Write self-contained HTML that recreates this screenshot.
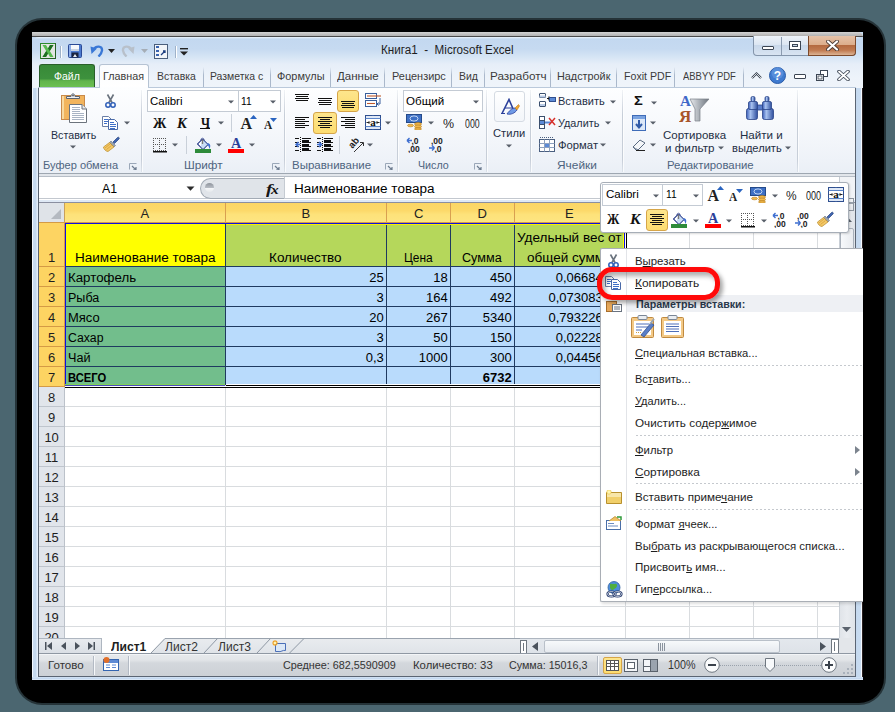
<!DOCTYPE html><html><head><meta charset="utf-8"><style>html,body{margin:0;padding:0;width:895px;height:712px;overflow:hidden;position:relative;background:#4b6670}</style></head><body>
<div style="position:absolute;left:15px;top:18px;width:871px;height:687px;background:rgba(0,0,0,0.5);border-radius:27px"></div>
<div style="position:absolute;left:17px;top:20px;width:867px;height:683px;background:#000;border-radius:25px"></div>
<div style="position:absolute;left:32px;top:32px;width:831px;height:648px;background:#c6daf0"></div>
<div style="position:absolute;left:32px;top:32px;width:831px;height:5px;background:linear-gradient(#d2d2d2,#a9a9a9);border-radius:0 7px 0 0"></div>
<div style="position:absolute;left:32px;top:36px;width:831px;height:1px;background:#4a4a4a;border-radius:0 7px 0 0"></div>
<div style="position:absolute;left:32px;top:37px;width:831px;height:51px;background:linear-gradient(#eef5fc 0px,#c3d8f0 2px,#c6daf1 12px,#d6e5f5 20px,#e6eef8 27px,#edf3fa 40px,#eff4fa 51px);border-radius:7px 7px 0 0"></div>
<div style="position:absolute;left:32px;top:88px;width:6px;height:592px;background:linear-gradient(90deg,#f4f9ff 0 1px,#c9dcf1 1px,#c4d8ee 4px,#e4eefa 5px)"></div>
<div style="position:absolute;left:856px;top:88px;width:7px;height:592px;background:linear-gradient(90deg,#c4d8ee 0,#c9dcf1 5px,#f4f9ff 5px 6px,#2a2020 6px)"></div>
<div style="position:absolute;left:32px;top:677px;width:831px;height:3px;background:linear-gradient(#d4e4f6,#c4d8ef 50%,#e4eefa)"></div>
<svg style="position:absolute;left:40px;top:43px;" width="16" height="16" viewBox="0 0 16 16">
<rect x="0.5" y="0.5" width="15" height="15" fill="#e3e6e3" stroke="#2d8a2d"/>
<path d="M15.5 0.5 V15.5 H0.5" fill="none" stroke="#1e3a1e" stroke-dasharray="1 1"/>
<path d="M2.5 2 L6 2 L8 5.5 L10 2 L13.5 2 L9.8 8 L13.5 14 L10 14 L8 10.5 L6 14 L2.5 14 L6.2 8 Z" fill="#57b94f"/>
<path d="M2.5 14 L6 14 L8 10.5 L6.2 8 Z M10 2 L13.5 2 L9.8 8 L8 5.5 Z" fill="#1e6e22"/></svg>
<div style="position:absolute;left:60px;top:46px;width:1px;height:12px;background:#9fb2c9;box-shadow:1px 0 0 #fff"></div>
<svg style="position:absolute;left:68px;top:44px;" width="14" height="14" viewBox="0 0 14 14">
<rect x="0.5" y="0.5" width="13" height="13" rx="1" fill="#4d7bd0" stroke="#2b4a96"/>
<rect x="1" y="1" width="2" height="12" fill="#8fb0ea"/>
<rect x="3" y="1" width="8" height="6" fill="#f6f8fb"/>
<rect x="3" y="5" width="8" height="2" fill="#c9d3e2"/>
<rect x="3.5" y="8.5" width="7" height="5" fill="#1a2440"/>
<path d="M5 13 L7 10 L9 13 Z" fill="#e8ecf2"/></svg>
<svg style="position:absolute;left:90px;top:44px;" width="14" height="13" viewBox="0 0 14 13">
<path d="M3.5 5.5 C6 1.5, 12.5 1.5, 12 6.5 C11.8 9, 10 11, 8.5 12.5" fill="none" stroke="#3a78d6" stroke-width="2.4"/>
<path d="M0.5 2.5 L7 4.5 L1.5 10 Z" fill="#3a78d6"/></svg>
<svg style="position:absolute;left:108px;top:49px;" width="7" height="4" viewBox="0 0 7 4"><path d="M0 0 L7 0 L3.5 4 Z" fill="#222"/></svg>
<svg style="position:absolute;left:121px;top:44px;" width="14" height="13" viewBox="0 0 14 13">
<path d="M10.5 5.5 C8 1.5, 1.5 1.5, 2 6.5 C2.2 9, 4 11, 5.5 12.5" fill="none" stroke="#b8c0ca" stroke-width="2.4"/>
<path d="M13.5 2.5 L7 4.5 L12.5 10 Z" fill="#b8c0ca"/></svg>
<svg style="position:absolute;left:141px;top:49px;" width="7" height="4" viewBox="0 0 7 4"><path d="M0 0 L7 0 L3.5 4 Z" fill="#a5adb6"/></svg>
<svg style="position:absolute;left:154px;top:44px;" width="14" height="15" viewBox="0 0 14 15">
<rect x="0.5" y="0.5" width="13" height="14" fill="#f2f5f9" stroke="#4a5e7c"/>
<rect x="2" y="2" width="3" height="2" fill="#3a64b0"/><rect x="2" y="6" width="3" height="2" fill="#3a64b0"/><rect x="2" y="10" width="3" height="2" fill="#3a64b0"/>
<path d="M7 11 L11 7 M9 7 L11 7 L11 9" stroke="#1d3f80" stroke-width="1.3" fill="none"/></svg>
<div style="position:absolute;left:175px;top:46px;width:1px;height:12px;background:#9fb2c9;box-shadow:1px 0 0 #fff"></div>
<svg style="position:absolute;left:180px;top:48px;" width="8" height="8" viewBox="0 0 8 8"><rect x="0" y="0" width="8" height="1.4" fill="#222"/><path d="M0 3.5 L8 3.5 L4 7.5 Z" fill="#222"/></svg>
<div id="t0" style="position:absolute;left:381.00px;top:43px;font:normal 12px/15px 'Liberation Sans', sans-serif;color:#1e1e1e;white-space:nowrap;transform:scaleX(0.9720);transform-origin:0 0;">Книга1&nbsp; -&nbsp; Microsoft Excel</div>
<div style="position:absolute;left:753px;top:36px;width:103px;height:20px;background:linear-gradient(#eef3f9,#dce6f2 45%,#c9d8ea 50%,#d8e4f2);border:1px solid #8495ab;border-top:none;border-radius:0 0 4px 4px;box-sizing:border-box"></div>
<div style="position:absolute;left:781px;top:37px;width:1px;height:18px;background:#8b9bb0"></div>
<div style="position:absolute;left:808px;top:36px;width:48px;height:20px;background:linear-gradient(#e6c2a8,#dcae8c 45%,#b46a40 50%,#c07a50 75%,#dcb494);border:1px solid #7c4a2c;border-top:none;border-radius:0 0 4px 0;box-sizing:border-box"></div>
<div style="position:absolute;left:762px;top:46px;width:12px;height:4px;background:#fff;border:1px solid #3c4654;border-radius:1px;box-sizing:border-box"></div>
<div style="position:absolute;left:789px;top:41px;width:12px;height:9px;border:1px solid #3c4654;background:transparent;box-sizing:border-box;box-shadow:inset 0 0 0 2px #fff, inset 0 0 0 3px #3c4654"></div>
<svg style="position:absolute;left:826px;top:40px;" width="13" height="11" viewBox="0 0 13 11"><path d="M2 1.5 L11 9.5 M11 1.5 L2 9.5" stroke="#4a3a34" stroke-width="3.8" stroke-linecap="round"/><path d="M2 1.5 L11 9.5 M11 1.5 L2 9.5" stroke="#fff" stroke-width="2.2" stroke-linecap="round"/></svg>
<div style="position:absolute;left:39px;top:64px;width:56px;height:23px;background:linear-gradient(#388a38,#3d913d 62%,#62b44c 72%,#6cc052);border:1px solid #2a5f2a;border-bottom:none;border-radius:3px 3px 0 0;box-sizing:border-box"></div>
<div id="t1" style="position:absolute;left:54.10px;top:69px;font:normal 11px/14px 'Liberation Sans', sans-serif;color:#fff;white-space:nowrap;transform:scaleX(0.9577);transform-origin:0 0;">Файл</div>
<div style="position:absolute;left:99px;top:64px;width:50px;height:24px;background:linear-gradient(#fbfcfe,#fff);border:1px solid #b6c3d3;border-bottom:none;border-radius:3px 3px 0 0;box-sizing:border-box"></div>
<div id="t2" style="position:absolute;left:103.30px;top:69px;font:normal 11px/14px 'Liberation Sans', sans-serif;color:#3b3b3b;white-space:nowrap;transform:scaleX(0.9783);transform-origin:0 0;">Главная</div>
<div style="position:absolute;left:203px;top:67px;width:1px;height:20px;background:linear-gradient(rgba(170,185,205,0),#aab8cb 40%,#aab8cb)"></div>
<div style="position:absolute;left:270px;top:67px;width:1px;height:20px;background:linear-gradient(rgba(170,185,205,0),#aab8cb 40%,#aab8cb)"></div>
<div style="position:absolute;left:330px;top:67px;width:1px;height:20px;background:linear-gradient(rgba(170,185,205,0),#aab8cb 40%,#aab8cb)"></div>
<div style="position:absolute;left:384px;top:67px;width:1px;height:20px;background:linear-gradient(rgba(170,185,205,0),#aab8cb 40%,#aab8cb)"></div>
<div style="position:absolute;left:451px;top:67px;width:1px;height:20px;background:linear-gradient(rgba(170,185,205,0),#aab8cb 40%,#aab8cb)"></div>
<div style="position:absolute;left:484px;top:67px;width:1px;height:20px;background:linear-gradient(rgba(170,185,205,0),#aab8cb 40%,#aab8cb)"></div>
<div style="position:absolute;left:550px;top:67px;width:1px;height:20px;background:linear-gradient(rgba(170,185,205,0),#aab8cb 40%,#aab8cb)"></div>
<div style="position:absolute;left:616px;top:67px;width:1px;height:20px;background:linear-gradient(rgba(170,185,205,0),#aab8cb 40%,#aab8cb)"></div>
<div style="position:absolute;left:674px;top:67px;width:1px;height:20px;background:linear-gradient(rgba(170,185,205,0),#aab8cb 40%,#aab8cb)"></div>
<div style="position:absolute;left:743px;top:67px;width:1px;height:20px;background:linear-gradient(rgba(170,185,205,0),#aab8cb 40%,#aab8cb)"></div>
<div id="t3" style="position:absolute;left:157.40px;top:69px;font:normal 11px/14px 'Liberation Sans', sans-serif;color:#3b3b3b;white-space:nowrap;transform:scaleX(0.9481);transform-origin:0 0;">Вставка</div>
<div id="t4" style="position:absolute;left:210.40px;top:69px;font:normal 11px/14px 'Liberation Sans', sans-serif;color:#3b3b3b;white-space:nowrap;transform:scaleX(0.9472);transform-origin:0 0;">Разметка с</div>
<div id="t5" style="position:absolute;left:276.80px;top:69px;font:normal 11px/14px 'Liberation Sans', sans-serif;color:#3b3b3b;white-space:nowrap;transform:scaleX(0.9925);transform-origin:0 0;">Формулы</div>
<div id="t6" style="position:absolute;left:337.20px;top:69px;font:normal 11px/14px 'Liberation Sans', sans-serif;color:#3b3b3b;white-space:nowrap;transform:scaleX(1.0474);transform-origin:0 0;">Данные</div>
<div id="t7" style="position:absolute;left:391.50px;top:69px;font:normal 11px/14px 'Liberation Sans', sans-serif;color:#3b3b3b;white-space:nowrap;transform:scaleX(0.9937);transform-origin:0 0;">Рецензирс</div>
<div id="t8" style="position:absolute;left:458.50px;top:69px;font:normal 11px/14px 'Liberation Sans', sans-serif;color:#3b3b3b;white-space:nowrap;transform:scaleX(0.9521);transform-origin:0 0;">Вид</div>
<div id="t9" style="position:absolute;left:490.00px;top:69px;font:normal 11px/14px 'Liberation Sans', sans-serif;color:#3b3b3b;white-space:nowrap;transform:scaleX(1.0656);transform-origin:0 0;">Разработч</div>
<div id="t10" style="position:absolute;left:557.10px;top:69px;font:normal 11px/14px 'Liberation Sans', sans-serif;color:#3b3b3b;white-space:nowrap;transform:scaleX(0.9853);transform-origin:0 0;">Надстройк</div>
<div id="t11" style="position:absolute;left:623.50px;top:69px;font:normal 11px/14px 'Liberation Sans', sans-serif;color:#3b3b3b;white-space:nowrap;transform:scaleX(0.9660);transform-origin:0 0;">Foxit PDF</div>
<div id="t12" style="position:absolute;left:683.40px;top:69px;font:normal 11px/14px 'Liberation Sans', sans-serif;color:#3b3b3b;white-space:nowrap;transform:scaleX(0.8578);transform-origin:0 0;">ABBYY PDF</div>
<svg style="position:absolute;left:751px;top:72px;" width="11" height="7" viewBox="0 0 11 7"><path d="M1 6 L5.5 1.5 L10 6" fill="none" stroke="#3c4654" stroke-width="2.2"/><path d="M1 6 L5.5 1.5 L10 6" fill="none" stroke="#fff" stroke-width="0.8"/></svg>
<svg style="position:absolute;left:769px;top:67px;" width="17" height="17" viewBox="0 0 17 17"><circle cx="8.5" cy="8.5" r="8" fill="#3e7ad0" stroke="#2b5ca8"/><circle cx="8.5" cy="6" r="6" fill="#6fa2e6" opacity="0.5"/><text x="8.5" y="13" text-anchor="middle" font-family="Liberation Sans" font-weight="bold" font-size="12" fill="#fff">?</text></svg>
<div style="position:absolute;left:794px;top:74px;width:12px;height:5px;background:#fff;border:1px solid #3c4654;border-radius:1px;box-sizing:border-box"></div>
<svg style="position:absolute;left:816px;top:70px;" width="12" height="11" viewBox="0 0 12 11"><rect x="4.5" y="0.5" width="7" height="6" fill="#fff" stroke="#3c4654"/><rect x="0.5" y="4.5" width="7" height="6" fill="#fff" stroke="#3c4654"/><rect x="2" y="6" width="4" height="3" fill="none" stroke="#3c4654" stroke-width="0.8"/></svg>
<svg style="position:absolute;left:837px;top:70px;" width="13" height="11" viewBox="0 0 13 11"><path d="M2 1.5 L11 9.5 M11 1.5 L2 9.5" stroke="#3c4654" stroke-width="3.6" stroke-linecap="round"/><path d="M2 1.5 L11 9.5 M11 1.5 L2 9.5" stroke="#fff" stroke-width="1.8" stroke-linecap="round"/></svg>
<div style="position:absolute;left:38px;top:87px;width:818px;height:86px;background:linear-gradient(#fdfeff,#f7f9fc 40%,#eef2f8 85%,#eaeff6);border-top:1px solid #bac9db;box-sizing:border-box"></div>
<div style="position:absolute;left:100px;top:87px;width:48px;height:1px;background:#fdfeff"></div>
<div style="position:absolute;left:141px;top:90px;width:1px;height:82px;background:linear-gradient(rgba(197,205,215,0.2),#c7ced8 30%,#c7ced8 85%,rgba(197,205,215,0.4))"></div>
<div style="position:absolute;left:142px;top:90px;width:1px;height:82px;background:rgba(255,255,255,0.7)"></div>
<div style="position:absolute;left:284px;top:90px;width:1px;height:82px;background:linear-gradient(rgba(197,205,215,0.2),#c7ced8 30%,#c7ced8 85%,rgba(197,205,215,0.4))"></div>
<div style="position:absolute;left:285px;top:90px;width:1px;height:82px;background:rgba(255,255,255,0.7)"></div>
<div style="position:absolute;left:397px;top:90px;width:1px;height:82px;background:linear-gradient(rgba(197,205,215,0.2),#c7ced8 30%,#c7ced8 85%,rgba(197,205,215,0.4))"></div>
<div style="position:absolute;left:398px;top:90px;width:1px;height:82px;background:rgba(255,255,255,0.7)"></div>
<div style="position:absolute;left:486px;top:90px;width:1px;height:82px;background:linear-gradient(rgba(197,205,215,0.2),#c7ced8 30%,#c7ced8 85%,rgba(197,205,215,0.4))"></div>
<div style="position:absolute;left:487px;top:90px;width:1px;height:82px;background:rgba(255,255,255,0.7)"></div>
<div style="position:absolute;left:530px;top:90px;width:1px;height:82px;background:linear-gradient(rgba(197,205,215,0.2),#c7ced8 30%,#c7ced8 85%,rgba(197,205,215,0.4))"></div>
<div style="position:absolute;left:531px;top:90px;width:1px;height:82px;background:rgba(255,255,255,0.7)"></div>
<div style="position:absolute;left:622px;top:90px;width:1px;height:82px;background:linear-gradient(rgba(197,205,215,0.2),#c7ced8 30%,#c7ced8 85%,rgba(197,205,215,0.4))"></div>
<div style="position:absolute;left:623px;top:90px;width:1px;height:82px;background:rgba(255,255,255,0.7)"></div>
<div style="position:absolute;left:797px;top:90px;width:1px;height:82px;background:linear-gradient(rgba(197,205,215,0.2),#c7ced8 30%,#c7ced8 85%,rgba(197,205,215,0.4))"></div>
<div style="position:absolute;left:798px;top:90px;width:1px;height:82px;background:rgba(255,255,255,0.7)"></div>
<div id="t13" style="position:absolute;left:42.50px;top:158px;font:normal 11px/14px 'Liberation Sans', sans-serif;color:#4e6480;white-space:nowrap;transform:scaleX(1.0049);transform-origin:0 0;">Буфер обмена</div>
<div id="t14" style="position:absolute;left:184.40px;top:158px;font:normal 11px/14px 'Liberation Sans', sans-serif;color:#4e6480;white-space:nowrap;transform:scaleX(1.0677);transform-origin:0 0;">Шрифт</div>
<div id="t15" style="position:absolute;left:292.30px;top:158px;font:normal 11px/14px 'Liberation Sans', sans-serif;color:#4e6480;white-space:nowrap;transform:scaleX(1.0450);transform-origin:0 0;">Выравнивание</div>
<div id="t16" style="position:absolute;left:417.70px;top:158px;font:normal 11px/14px 'Liberation Sans', sans-serif;color:#4e6480;white-space:nowrap;transform:scaleX(0.9709);transform-origin:0 0;">Число</div>
<div id="t17" style="position:absolute;left:557.00px;top:158px;font:normal 11px/14px 'Liberation Sans', sans-serif;color:#4e6480;white-space:nowrap;transform:scaleX(1.0803);transform-origin:0 0;">Ячейки</div>
<div id="t18" style="position:absolute;left:666.70px;top:158px;font:normal 11px/14px 'Liberation Sans', sans-serif;color:#4e6480;white-space:nowrap;transform:scaleX(1.0337);transform-origin:0 0;">Редактирование</div>
<svg style="position:absolute;left:129px;top:163px;" width="8" height="7" viewBox="0 0 8 7"><path d="M0.5 6.5 L0.5 0.5 L7.5 0.5" fill="none" stroke="#9aa7b8"/><path d="M3 3 L7 7 M7 4 L7 7 L4 7" fill="none" stroke="#6d7c90" stroke-width="1.2"/></svg>
<svg style="position:absolute;left:272px;top:163px;" width="8" height="7" viewBox="0 0 8 7"><path d="M0.5 6.5 L0.5 0.5 L7.5 0.5" fill="none" stroke="#9aa7b8"/><path d="M3 3 L7 7 M7 4 L7 7 L4 7" fill="none" stroke="#6d7c90" stroke-width="1.2"/></svg>
<svg style="position:absolute;left:385px;top:163px;" width="8" height="7" viewBox="0 0 8 7"><path d="M0.5 6.5 L0.5 0.5 L7.5 0.5" fill="none" stroke="#9aa7b8"/><path d="M3 3 L7 7 M7 4 L7 7 L4 7" fill="none" stroke="#6d7c90" stroke-width="1.2"/></svg>
<svg style="position:absolute;left:474px;top:163px;" width="8" height="7" viewBox="0 0 8 7"><path d="M0.5 6.5 L0.5 0.5 L7.5 0.5" fill="none" stroke="#9aa7b8"/><path d="M3 3 L7 7 M7 4 L7 7 L4 7" fill="none" stroke="#6d7c90" stroke-width="1.2"/></svg>
<svg style="position:absolute;left:60px;top:92px;" width="28" height="32" viewBox="0 0 28 32">
<rect x="1.5" y="3.5" width="23" height="24" fill="#f2b45c" stroke="#c98a4a"/>
<rect x="2" y="4" width="2" height="23" fill="#f8d9a0"/>
<path d="M6.5 6.5 H19.5 V4.5 H15 C15 1, 11 1, 11 4.5 H6.5 Z" fill="#eef1f5" stroke="#5d6570"/>
<circle cx="13" cy="3.6" r="1" fill="#5d6570"/>
<path d="M9.5 12.5 H22 L26.5 17 V30.5 H9.5 Z" fill="#fff" stroke="#6c737c"/>
<path d="M22 12.5 V17 H26.5" fill="#e6e9ed" stroke="#6c737c"/>
<path d="M12 15.5 H20 M12 17.5 H20 M12 19.5 H20 M12 21.5 H24 M12 23.5 H24 M12 25.5 H24 M12 27.5 H24" stroke="#a9b4c4"/></svg>
<div id="t19" style="position:absolute;left:50.60px;top:128px;font:normal 11px/14px 'Liberation Sans', sans-serif;color:#1f2f45;white-space:nowrap;transform:scaleX(0.9702);transform-origin:0 0;">Вставить</div>
<svg style="position:absolute;left:70px;top:145px;" width="6" height="4" viewBox="0 0 6 4"><path d="M0 0.5 L6 0.5 L3 3.5 Z" fill="#585f69"/></svg>
<svg style="position:absolute;left:105px;top:94px;" width="11" height="14" viewBox="0 0 11 14"><path d="M2.5 0.5 L7 8.5 M8.5 0.5 L4 8.5" stroke="#6a737e" stroke-width="1.6"/>
<circle cx="3" cy="11" r="2.2" fill="none" stroke="#2f5fb8" stroke-width="1.5"/>
<circle cx="8" cy="11" r="2.2" fill="none" stroke="#2f5fb8" stroke-width="1.5"/></svg>
<svg style="position:absolute;left:102px;top:116px;" width="17" height="14" viewBox="0 0 17 14"><path d="M0.5 0.5 H6.5 L9.5 3.5 V10.5 H0.5 Z" fill="#fff" stroke="#6b7fa6"/>
<path d="M2 3.5 H6 M2 5.5 H8 M2 7.5 H5" stroke="#3f6fc8"/>
<path d="M6.5 3.5 H12.5 L15.5 6.5 V13.5 H6.5 Z" fill="#fff" stroke="#4a6aa8"/>
<path d="M8 6.5 H12 M8 8.5 H14 M8 10.5 H14 M8 12.5 H13" stroke="#3f6fc8"/></svg>
<svg style="position:absolute;left:124px;top:121px;" width="6" height="4" viewBox="0 0 6 4"><path d="M0 0.5 L6 0.5 L3 3.5 Z" fill="#585f69"/></svg>
<svg style="position:absolute;left:103px;top:136px;" width="17" height="16" viewBox="0 0 17 16"><path d="M10 6 L14.5 1.5 C15.5 0.5, 17 2, 16 3 L11.5 7.5 Z" fill="#3f64b0" stroke="#28457f" stroke-width="0.7"/>
<path d="M8 5 L12.5 9.5 L11 11 L6.5 6.5 Z" fill="#9aa3ae" stroke="#6b7480" stroke-width="0.6"/>
<path d="M6.5 6.5 L11 11 L5 15.5 C3 15.5, 0.5 13, 0.5 11 Z" fill="#f3c867" stroke="#b88a2a" stroke-width="0.7"/>
<path d="M2 12 L7 8 M3.5 13.5 L8.5 9.5" stroke="#d39a30" stroke-width="0.7"/></svg>
<div style="position:absolute;left:147px;top:90px;width:134px;height:22px;background:#fff;border:1px solid #c4cbd4;box-sizing:border-box"></div>
<div style="position:absolute;left:238px;top:91px;width:1px;height:20px;background:#c4cbd4"></div>
<div id="t20" style="position:absolute;left:150.40px;top:94px;font:normal 11px/14px 'Liberation Sans', sans-serif;color:#000;white-space:nowrap;transform:scaleX(1.0413);transform-origin:0 0;">Calibri</div>
<svg style="position:absolute;left:228px;top:100px;" width="6" height="4" viewBox="0 0 6 4"><path d="M0 0.5 L6 0.5 L3 3.5 Z" fill="#585f69"/></svg>
<div id="t21" style="position:absolute;left:240.50px;top:94px;font:normal 11px/14px 'Liberation Sans', sans-serif;color:#000;white-space:nowrap;transform:scaleX(0.9291);transform-origin:0 0;">11</div>
<svg style="position:absolute;left:270px;top:100px;" width="6" height="4" viewBox="0 0 6 4"><path d="M0 0.5 L6 0.5 L3 3.5 Z" fill="#585f69"/></svg>
<div id="t22" style="position:absolute;left:152.50px;top:114px;font:bold 15px/18px 'Liberation Sans', sans-serif;color:#111;white-space:nowrap;font-family:'Liberation Serif';transform:scaleX(0.9000);transform-origin:0 0;">Ж</div>
<div id="t23" style="position:absolute;left:177.46px;top:114px;font:bold 15px/18px 'Liberation Sans', sans-serif;color:#111;white-space:nowrap;font-family:'Liberation Serif';font-style:italic;transform:scaleX(0.9583);transform-origin:0 0;">К</div>
<div id="t24" style="position:absolute;left:200.50px;top:114px;font:bold 15px/18px 'Liberation Sans', sans-serif;color:#111;white-space:nowrap;font-family:'Liberation Serif';transform:scaleX(0.8182);transform-origin:0 0;">Ч</div>
<div style="position:absolute;left:200px;top:128px;width:10px;height:1px;background:#111"></div>
<svg style="position:absolute;left:218px;top:121px;" width="6" height="4" viewBox="0 0 6 4"><path d="M0 0.5 L6 0.5 L3 3.5 Z" fill="#585f69"/></svg>
<div style="position:absolute;left:231px;top:114px;width:1px;height:18px;background:#c9d0d9"></div>
<div id="t25" style="position:absolute;left:240.50px;top:114px;font:bold 16px/19px 'Liberation Sans', sans-serif;color:#222;white-space:nowrap;font-family:'Liberation Serif';">A</div>
<svg style="position:absolute;left:250px;top:115px;" width="7" height="4" viewBox="0 0 7 4"><path d="M0 4 L3.5 0 L7 4 Z" fill="#2a64c0"/></svg>
<div id="t26" style="position:absolute;left:264.00px;top:118px;font:bold 12px/15px 'Liberation Sans', sans-serif;color:#222;white-space:nowrap;font-family:'Liberation Serif';transform:scaleX(0.9444);transform-origin:0 0;">A</div>
<svg style="position:absolute;left:270px;top:118px;" width="7" height="4" viewBox="0 0 7 4"><path d="M0 0 L7 0 L3.5 4 Z" fill="#2a64c0"/></svg>
<svg style="position:absolute;left:153px;top:138px;" width="14" height="15" viewBox="0 0 14 15"><rect x="0" y="0" width="1" height="1" fill="#555"/><rect x="0" y="0" width="1" height="1" fill="#555"/><rect x="0" y="6" width="1" height="1" fill="#555"/><rect x="6" y="0" width="1" height="1" fill="#555"/><rect x="0" y="12" width="1" height="1" fill="#555"/><rect x="12" y="0" width="1" height="1" fill="#555"/><rect x="2" y="0" width="1" height="1" fill="#555"/><rect x="0" y="2" width="1" height="1" fill="#555"/><rect x="2" y="6" width="1" height="1" fill="#555"/><rect x="6" y="2" width="1" height="1" fill="#555"/><rect x="2" y="12" width="1" height="1" fill="#555"/><rect x="12" y="2" width="1" height="1" fill="#555"/><rect x="4" y="0" width="1" height="1" fill="#555"/><rect x="0" y="4" width="1" height="1" fill="#555"/><rect x="4" y="6" width="1" height="1" fill="#555"/><rect x="6" y="4" width="1" height="1" fill="#555"/><rect x="4" y="12" width="1" height="1" fill="#555"/><rect x="12" y="4" width="1" height="1" fill="#555"/><rect x="6" y="0" width="1" height="1" fill="#555"/><rect x="0" y="6" width="1" height="1" fill="#555"/><rect x="6" y="6" width="1" height="1" fill="#555"/><rect x="6" y="6" width="1" height="1" fill="#555"/><rect x="6" y="12" width="1" height="1" fill="#555"/><rect x="12" y="6" width="1" height="1" fill="#555"/><rect x="8" y="0" width="1" height="1" fill="#555"/><rect x="0" y="8" width="1" height="1" fill="#555"/><rect x="8" y="6" width="1" height="1" fill="#555"/><rect x="6" y="8" width="1" height="1" fill="#555"/><rect x="8" y="12" width="1" height="1" fill="#555"/><rect x="12" y="8" width="1" height="1" fill="#555"/><rect x="10" y="0" width="1" height="1" fill="#555"/><rect x="0" y="10" width="1" height="1" fill="#555"/><rect x="10" y="6" width="1" height="1" fill="#555"/><rect x="6" y="10" width="1" height="1" fill="#555"/><rect x="10" y="12" width="1" height="1" fill="#555"/><rect x="12" y="10" width="1" height="1" fill="#555"/><rect x="12" y="0" width="1" height="1" fill="#555"/><rect x="0" y="12" width="1" height="1" fill="#555"/><rect x="12" y="6" width="1" height="1" fill="#555"/><rect x="6" y="12" width="1" height="1" fill="#555"/><rect x="12" y="12" width="1" height="1" fill="#555"/><rect x="12" y="12" width="1" height="1" fill="#555"/><rect x="0" y="13" width="14" height="1.5" fill="#111"/></svg>
<svg style="position:absolute;left:172px;top:143px;" width="6" height="4" viewBox="0 0 6 4"><path d="M0 0.5 L6 0.5 L3 3.5 Z" fill="#585f69"/></svg>
<div style="position:absolute;left:186px;top:136px;width:1px;height:18px;background:#c9d0d9"></div>
<svg style="position:absolute;left:195px;top:137px;" width="17" height="16" viewBox="0 0 17 16"><path d="M2.5 7 L7.5 2 L13 7.5 L8 12.5 Z" fill="#fff" stroke="#2c3f8c" stroke-width="1"/>
<path d="M7.5 2 L13 7.5 L8 12.5 L5.5 10 Z" fill="#c9dcf4"/>
<path d="M2.5 7 L7.5 2 L13 7.5 L8 12.5 Z" fill="none" stroke="#2c3f8c" stroke-width="1"/>
<path d="M6 3.5 C5.5 0.5, 9.5 0.5, 9 3.5" fill="none" stroke="#2c3f8c" stroke-width="0.9"/>
<path d="M7.5 2.5 V7" stroke="#777" stroke-width="1.4"/>
<path d="M12.5 6 C15.5 6.5, 16 9, 14.5 12 C14 10, 13.5 8.5, 12.5 8 Z" fill="#3f6fd0"/>
<rect x="0" y="12" width="16" height="4" fill="#2e8b3a"/></svg>
<svg style="position:absolute;left:216px;top:143px;" width="6" height="4" viewBox="0 0 6 4"><path d="M0 0.5 L6 0.5 L3 3.5 Z" fill="#585f69"/></svg>
<div id="t27" style="position:absolute;left:231.20px;top:134px;font:bold 15px/18px 'Liberation Sans', sans-serif;color:#2b3f9a;white-space:nowrap;font-family:'Liberation Serif';transform:scaleX(0.9455);transform-origin:0 0;">A</div>
<div style="position:absolute;left:228px;top:149px;width:16px;height:4px;background:#ff0000"></div>
<svg style="position:absolute;left:249px;top:143px;" width="6" height="4" viewBox="0 0 6 4"><path d="M0 0.5 L6 0.5 L3 3.5 Z" fill="#585f69"/></svg>
<svg style="position:absolute;left:295px;top:94px;" width="15" height="10" viewBox="0 0 15 10"><rect x="0" y="0" width="14" height="1" fill="#111"/><rect x="1" y="2" width="12" height="1" fill="#111"/><rect x="0" y="4" width="14" height="1" fill="#111"/><rect x="1" y="6" width="12" height="1" fill="#111"/></svg>
<svg style="position:absolute;left:318px;top:98px;" width="15" height="10" viewBox="0 0 15 10"><rect x="0" y="0" width="14" height="1" fill="#111"/><rect x="1" y="2" width="12" height="1" fill="#111"/><rect x="0" y="4" width="14" height="1" fill="#111"/><rect x="1" y="6" width="12" height="1" fill="#111"/></svg>
<div style="position:absolute;left:337px;top:90px;width:22px;height:22px;background:linear-gradient(#fde58c,#fcdc70);border:1px solid #d6a548;border-radius:3px;box-sizing:border-box"></div>
<svg style="position:absolute;left:341px;top:101px;" width="15" height="10" viewBox="0 0 15 10"><rect x="0" y="0" width="14" height="1" fill="#111"/><rect x="1" y="2" width="12" height="1" fill="#111"/><rect x="0" y="4" width="14" height="1" fill="#111"/><rect x="1" y="6" width="12" height="1" fill="#111"/></svg>
<svg style="position:absolute;left:365px;top:93px;" width="17" height="15" viewBox="0 0 17 15">
<rect x="0.5" y="0.5" width="11" height="5" fill="#fff" stroke="#3a5f9c"/>
<path d="M2 3 H16" stroke="#c0592a" stroke-width="1.1"/>
<rect x="0.5" y="7.5" width="11" height="6" fill="#fff" stroke="#3a5f9c"/>
<path d="M2 10.5 H10" stroke="#c0592a" stroke-width="1.1"/>
<path d="M15 5 V11 H12.5 M13.5 9.5 L12 11 L13.5 12.5" fill="none" stroke="#3a5f9c"/></svg>
<svg style="position:absolute;left:295px;top:117px;" width="15" height="14" viewBox="0 0 15 14"><rect x="0" y="0" width="14" height="1" fill="#111"/><rect x="0" y="2" width="10" height="1" fill="#111"/><rect x="0" y="4" width="14" height="1" fill="#111"/><rect x="0" y="6" width="10" height="1" fill="#111"/><rect x="0" y="8" width="14" height="1" fill="#111"/><rect x="0" y="10" width="10" height="1" fill="#111"/></svg>
<div style="position:absolute;left:313px;top:112px;width:24px;height:22px;background:linear-gradient(#fde58c,#fcdc70);border:1px solid #d6a548;border-radius:3px;box-sizing:border-box"></div>
<svg style="position:absolute;left:318px;top:117px;" width="15" height="14" viewBox="0 0 15 14"><rect x="0" y="0" width="14" height="1" fill="#111"/><rect x="2" y="2" width="10" height="1" fill="#111"/><rect x="0" y="4" width="14" height="1" fill="#111"/><rect x="2" y="6" width="10" height="1" fill="#111"/><rect x="0" y="8" width="14" height="1" fill="#111"/><rect x="2" y="10" width="10" height="1" fill="#111"/></svg>
<svg style="position:absolute;left:341px;top:117px;" width="15" height="14" viewBox="0 0 15 14"><rect x="0" y="0" width="14" height="1" fill="#111"/><rect x="4" y="2" width="10" height="1" fill="#111"/><rect x="0" y="4" width="14" height="1" fill="#111"/><rect x="4" y="6" width="10" height="1" fill="#111"/><rect x="0" y="8" width="14" height="1" fill="#111"/><rect x="4" y="10" width="10" height="1" fill="#111"/></svg>
<svg style="position:absolute;left:365px;top:115px;" width="16" height="15" viewBox="0 0 16 15"><rect x="0.5" y="0.5" width="15" height="14" fill="#fff" stroke="#2f4f8f"/>
<path d="M0.5 3.5 H15.5 M0.5 11.5 H15.5 M8 0.5 V3.5 M8 11.5 V14.5" stroke="#5b84c8"/>
<rect x="1" y="1" width="14" height="2" fill="#dfe8f6"/><rect x="1" y="12" width="14" height="2" fill="#dfe8f6"/>
<text x="8" y="10.5" text-anchor="middle" font-family="Liberation Serif" font-weight="bold" font-size="11" fill="#111">a</text>
<path d="M1.5 7.5 H4.5 M11.5 7.5 H14.5" stroke="#222"/><path d="M3.5 6 L5 7.5 L3.5 9 M12.5 6 L11 7.5 L12.5 9" stroke="#222" fill="none" stroke-width="0.8"/></svg>
<svg style="position:absolute;left:385px;top:121px;" width="6" height="4" viewBox="0 0 6 4"><path d="M0 0.5 L6 0.5 L3 3.5 Z" fill="#585f69"/></svg>
<svg style="position:absolute;left:295px;top:137px;" width="16" height="16" viewBox="0 0 16 16"><rect x="0" y="1" width="4" height="1" fill="#111"/><rect x="7" y="1" width="9" height="1" fill="#111"/><rect x="0" y="5" width="4" height="1" fill="#111"/><rect x="7" y="5" width="9" height="1" fill="#111"/><rect x="0" y="9" width="4" height="1" fill="#111"/><rect x="7" y="9" width="9" height="1" fill="#111"/><rect x="0" y="13" width="4" height="1" fill="#111"/><rect x="7" y="13" width="9" height="1" fill="#111"/><rect x="7" y="3" width="7" height="2" fill="#111"/><rect x="7" y="7" width="7" height="2" fill="#111"/><rect x="7" y="11" width="7" height="2" fill="#111"/><rect x="5" y="0" width="1" height="1" fill="#111"/><rect x="5" y="2" width="1" height="1" fill="#111"/><rect x="5" y="4" width="1" height="1" fill="#111"/><rect x="5" y="6" width="1" height="1" fill="#111"/><rect x="5" y="8" width="1" height="1" fill="#111"/><rect x="5" y="10" width="1" height="1" fill="#111"/><rect x="5" y="12" width="1" height="1" fill="#111"/><rect x="5" y="14" width="1" height="1" fill="#111"/><path d="M1 7.5 H5 M3.5 5 L1 7.5 L3.5 10" stroke="#3f6fd0" stroke-width="1.5" fill="none"/></svg>
<svg style="position:absolute;left:317px;top:137px;" width="16" height="16" viewBox="0 0 16 16"><rect x="0" y="1" width="4" height="1" fill="#111"/><rect x="7" y="1" width="9" height="1" fill="#111"/><rect x="0" y="5" width="4" height="1" fill="#111"/><rect x="7" y="5" width="9" height="1" fill="#111"/><rect x="0" y="9" width="4" height="1" fill="#111"/><rect x="7" y="9" width="9" height="1" fill="#111"/><rect x="0" y="13" width="4" height="1" fill="#111"/><rect x="7" y="13" width="9" height="1" fill="#111"/><rect x="7" y="3" width="7" height="2" fill="#111"/><rect x="7" y="7" width="7" height="2" fill="#111"/><rect x="7" y="11" width="7" height="2" fill="#111"/><rect x="5" y="0" width="1" height="1" fill="#111"/><rect x="5" y="2" width="1" height="1" fill="#111"/><rect x="5" y="4" width="1" height="1" fill="#111"/><rect x="5" y="6" width="1" height="1" fill="#111"/><rect x="5" y="8" width="1" height="1" fill="#111"/><rect x="5" y="10" width="1" height="1" fill="#111"/><rect x="5" y="12" width="1" height="1" fill="#111"/><rect x="5" y="14" width="1" height="1" fill="#111"/><path d="M0 7.5 H4 M2 5 L4.5 7.5 L2 10" stroke="#3f6fd0" stroke-width="1.5" fill="none"/></svg>
<div style="position:absolute;left:339px;top:136px;width:1px;height:18px;background:#c9d0d9"></div>
<svg style="position:absolute;left:349px;top:136px;" width="16" height="17" viewBox="0 0 16 17">
<text transform="translate(3.5,13) rotate(-50)" font-family="Liberation Sans" font-weight="bold" font-size="9.5" fill="#222">ab</text>
<path d="M5 16 L14 7 M11 6.5 H14.5 V10" stroke="#333" stroke-width="1" fill="none"/></svg>
<svg style="position:absolute;left:367px;top:143px;" width="6" height="4" viewBox="0 0 6 4"><path d="M0 0.5 L6 0.5 L3 3.5 Z" fill="#585f69"/></svg>
<div style="position:absolute;left:403px;top:90px;width:80px;height:22px;background:#fff;border:1px solid #c4cbd4;box-sizing:border-box"></div>
<div id="t28" style="position:absolute;left:406.40px;top:94px;font:normal 11px/14px 'Liberation Sans', sans-serif;color:#000;white-space:nowrap;transform:scaleX(1.0541);transform-origin:0 0;">Общий</div>
<svg style="position:absolute;left:473px;top:100px;" width="6" height="4" viewBox="0 0 6 4"><path d="M0 0.5 L6 0.5 L3 3.5 Z" fill="#585f69"/></svg>
<svg style="position:absolute;left:406px;top:114px;" width="17" height="16" viewBox="0 0 17 16">
<rect x="0.5" y="0.5" width="15" height="8" fill="#3d6fc4" stroke="#244a8a"/>
<ellipse cx="8" cy="4.5" rx="4" ry="2.6" fill="none" stroke="#cfe0f8" stroke-width="0.9"/>
<ellipse cx="12" cy="10" rx="3.5" ry="1.5" fill="#f2b84a" stroke="#b07a20" stroke-width="0.6"/>
<ellipse cx="12" cy="12.5" rx="3.5" ry="1.5" fill="#f2b84a" stroke="#b07a20" stroke-width="0.6"/>
<ellipse cx="12" cy="15" rx="3.5" ry="1.2" fill="#f2b84a" stroke="#b07a20" stroke-width="0.6"/>
<ellipse cx="4.5" cy="11.5" rx="3" ry="1.3" fill="#f2b84a" stroke="#b07a20" stroke-width="0.6"/></svg>
<svg style="position:absolute;left:428px;top:121px;" width="6" height="4" viewBox="0 0 6 4"><path d="M0 0.5 L6 0.5 L3 3.5 Z" fill="#585f69"/></svg>
<div id="t29" style="position:absolute;left:442.80px;top:116px;font:normal 13px/16px 'Liberation Sans', sans-serif;color:#222;white-space:nowrap;transform:scaleX(0.9583);transform-origin:0 0;">%</div>
<div id="t30" style="position:absolute;left:464.60px;top:116px;font:normal 13px/16px 'Liberation Sans', sans-serif;color:#222;white-space:nowrap;transform:scaleX(0.6757);transform-origin:0 0;">000</div>
<svg style="position:absolute;left:406px;top:137px;" width="19" height="16" viewBox="0 0 19 16"><path d="M1 3.5 H6 M1 3.5 L3.5 1 M1 3.5 L3.5 6" stroke="#3f6fd0" stroke-width="1.4" fill="none"/>
<text x="5.5" y="7" font-family="Liberation Sans" font-weight="bold" font-size="8.5" fill="#222">,0</text>
<text x="2" y="15" font-family="Liberation Sans" font-weight="bold" font-size="8.5" fill="#222">,00</text></svg>
<svg style="position:absolute;left:429px;top:137px;" width="19" height="16" viewBox="0 0 19 16"><text x="2" y="7" font-family="Liberation Sans" font-weight="bold" font-size="8.5" fill="#222">,00</text>
<path d="M0 11 H5.5 M5.5 11 L3 8.5 M5.5 11 L3 13.5" stroke="#3f6fd0" stroke-width="1.4" fill="none"/>
<text x="5.5" y="15" font-family="Liberation Sans" font-weight="bold" font-size="8.5" fill="#222">,0</text></svg>
<div style="position:absolute;left:494px;top:91px;width:31px;height:31px;background:linear-gradient(#fff,#f3f6fa);border:1px solid #d5dbe3;border-radius:3px;box-sizing:border-box"></div>
<svg style="position:absolute;left:501px;top:98px;" width="19" height="18" viewBox="0 0 19 18">
<path d="M1 15.5 L8 1.5 L13 13" fill="none" stroke="#2a3f9a" stroke-width="1.6"/>
<path d="M0 15.5 H4 M4 10 H11" stroke="#2a3f9a" stroke-width="1.2"/>
<path d="M6 16 C8 13, 11 10, 14 10 L16 12 C14 15, 10 17, 6 16 Z" fill="#6f9ae6" stroke="#2a3f9a" stroke-width="0.8"/>
<path d="M14 10 L17.5 6.5 L18.5 8 L16 12 Z" fill="#f0a830" stroke="#c07a20" stroke-width="0.6"/></svg>
<div id="t31" style="position:absolute;left:493.00px;top:126px;font:normal 11px/14px 'Liberation Sans', sans-serif;color:#1f2f45;white-space:nowrap;transform:scaleX(1.0144);transform-origin:0 0;">Стили</div>
<svg style="position:absolute;left:506px;top:144px;" width="6" height="4" viewBox="0 0 6 4"><path d="M0 0.5 L6 0.5 L3 3.5 Z" fill="#585f69"/></svg>
<svg style="position:absolute;left:539px;top:93px;" width="17" height="15" viewBox="0 0 17 15"><rect x="0.5" y="0.5" width="6" height="4" rx="0.5" fill="#fff" stroke="#3a4f6e"/><rect x="0.5" y="2.5" width="6" height="2" fill="#b9cbe6"/><rect x="0.5" y="8.5" width="6" height="5" rx="0.5" fill="#fff" stroke="#3a4f6e"/><rect x="1" y="11" width="5" height="2" fill="#b9cbe6"/><path d="M8 5.5 H12 M10 3.5 V7.5" stroke="#111" stroke-width="1.2"/><rect x="10.5" y="4.5" width="6" height="4" fill="#5b8ad6" stroke="#2f4f8f"/></svg>
<div id="t32" style="position:absolute;left:558.20px;top:94px;font:normal 11px/14px 'Liberation Sans', sans-serif;color:#1f2f45;white-space:nowrap;transform:scaleX(1.0022);transform-origin:0 0;">Вставить</div>
<svg style="position:absolute;left:610px;top:100px;" width="6" height="4" viewBox="0 0 6 4"><path d="M0 0.5 L6 0.5 L3 3.5 Z" fill="#585f69"/></svg>
<svg style="position:absolute;left:539px;top:116px;" width="17" height="14" viewBox="0 0 17 14"><rect x="0.5" y="0.5" width="5" height="4" fill="#fff" stroke="#3a4f6e"/><rect x="0.5" y="4.5" width="5" height="4" fill="#5b8ad6" stroke="#3a4f6e"/><rect x="0.5" y="8.5" width="5" height="4" fill="#fff" stroke="#3a4f6e"/><path d="M6 6.5 H12" stroke="#5b8ad6" stroke-width="2"/><path d="M10 2 L16 9 M16 2 L10 9" stroke="#d8302a" stroke-width="1.5"/></svg>
<div id="t33" style="position:absolute;left:558.00px;top:116px;font:normal 11px/14px 'Liberation Sans', sans-serif;color:#1f2f45;white-space:nowrap;transform:scaleX(0.9843);transform-origin:0 0;">Удалить</div>
<svg style="position:absolute;left:605px;top:121px;" width="6" height="4" viewBox="0 0 6 4"><path d="M0 0.5 L6 0.5 L3 3.5 Z" fill="#585f69"/></svg>
<svg style="position:absolute;left:539px;top:137px;" width="17" height="16" viewBox="0 0 17 16"><rect x="0.5" y="2.5" width="15" height="12" fill="#fff" stroke="#4a5f80"/><path d="M0.5 6.5 H15.5 M0.5 10.5 H15.5 M5.5 2.5 V14.5 M10.5 2.5 V14.5" stroke="#8ea2c0"/><rect x="6" y="7" width="4" height="3" fill="#5b8ad6"/><path d="M1 0.5 H15" stroke="#4a5f80" stroke-dasharray="1 1"/></svg>
<div id="t34" style="position:absolute;left:558.00px;top:138px;font:normal 11px/14px 'Liberation Sans', sans-serif;color:#1f2f45;white-space:nowrap;transform:scaleX(1.0247);transform-origin:0 0;">Формат</div>
<svg style="position:absolute;left:600px;top:143px;" width="6" height="4" viewBox="0 0 6 4"><path d="M0 0.5 L6 0.5 L3 3.5 Z" fill="#585f69"/></svg>
<div id="t35" style="position:absolute;left:634.00px;top:93px;font:bold 13px/16px 'Liberation Sans', sans-serif;color:#111;white-space:nowrap;transform:scaleX(1.1250);transform-origin:0 0;">Σ</div>
<svg style="position:absolute;left:651px;top:101px;" width="6" height="4" viewBox="0 0 6 4"><path d="M0 0.5 L6 0.5 L3 3.5 Z" fill="#585f69"/></svg>
<svg style="position:absolute;left:632px;top:115px;" width="14" height="16" viewBox="0 0 14 16"><rect x="0.5" y="0.5" width="13" height="15" fill="#dce8f8" stroke="#3f6cb8"/><rect x="1" y="1" width="12" height="3" fill="#7aa3e0"/><path d="M7 5 V12 M4 9 L7 12.5 L10 9" stroke="#2f5aa8" stroke-width="2" fill="none"/></svg>
<svg style="position:absolute;left:650px;top:121px;" width="6" height="4" viewBox="0 0 6 4"><path d="M0 0.5 L6 0.5 L3 3.5 Z" fill="#585f69"/></svg>
<svg style="position:absolute;left:632px;top:139px;" width="14" height="12" viewBox="0 0 14 12"><path d="M1 8 L8 1 L13 4 L6 11 Z" fill="#f4f6f9" stroke="#5a6a80"/><path d="M1 8 L4 11 L6 11" fill="#c9d4e2" stroke="#5a6a80"/><path d="M4 11.5 H13" stroke="#222"/></svg>
<svg style="position:absolute;left:650px;top:143px;" width="6" height="4" viewBox="0 0 6 4"><path d="M0 0.5 L6 0.5 L3 3.5 Z" fill="#585f69"/></svg>
<svg style="position:absolute;left:679px;top:93px;" width="32" height="30" viewBox="0 0 32 30">
<defs><linearGradient id="fun" x1="0" x2="1"><stop offset="0" stop-color="#e8eaed"/><stop offset="0.5" stop-color="#a9afb6"/><stop offset="1" stop-color="#6f767e"/></linearGradient></defs>
<path d="M11 6 H30 L21 16 V28 L16 28 V16 Z" fill="url(#fun)" stroke="#7a8088" stroke-width="0.7"/>
<text x="1" y="13" font-family="Liberation Serif" font-weight="bold" font-size="15" fill="#3f68c8">A</text>
<text x="0" y="29" font-family="Liberation Serif" font-weight="bold" font-size="17" fill="#a8552a">Я</text></svg>
<div id="t36" style="position:absolute;left:662.80px;top:128px;font:normal 11px/14px 'Liberation Sans', sans-serif;color:#1f2f45;white-space:nowrap;transform:scaleX(1.0448);transform-origin:0 0;">Сортировка</div>
<div id="t37" style="position:absolute;left:665.00px;top:141px;font:normal 11px/14px 'Liberation Sans', sans-serif;color:#1f2f45;white-space:nowrap;transform:scaleX(1.0573);transform-origin:0 0;">и фильтр</div>
<svg style="position:absolute;left:718px;top:146px;" width="6" height="4" viewBox="0 0 6 4"><path d="M0 0.5 L6 0.5 L3 3.5 Z" fill="#585f69"/></svg>
<svg style="position:absolute;left:746px;top:96px;" width="28" height="24" viewBox="0 0 28 24">
<defs><linearGradient id="bin" x1="0" x2="1"><stop offset="0" stop-color="#3a5db8"/><stop offset="0.35" stop-color="#a9c3f0"/><stop offset="1" stop-color="#2f4f9e"/></linearGradient></defs>
<rect x="0.5" y="12.5" width="11" height="11" rx="2" fill="url(#bin)" stroke="#2a4488" stroke-width="0.8"/>
<rect x="16.5" y="12.5" width="11" height="11" rx="2" fill="url(#bin)" stroke="#2a4488" stroke-width="0.8"/>
<rect x="2.5" y="5.5" width="9" height="8" rx="1.5" fill="url(#bin)" stroke="#2a4488" stroke-width="0.8"/>
<rect x="16.5" y="5.5" width="9" height="8" rx="1.5" fill="url(#bin)" stroke="#2a4488" stroke-width="0.8"/>
<rect x="5" y="0.5" width="4" height="5" rx="1.5" fill="url(#bin)" stroke="#2a4488" stroke-width="0.8"/>
<rect x="19" y="0.5" width="4" height="5" rx="1.5" fill="url(#bin)" stroke="#2a4488" stroke-width="0.8"/>
<rect x="11.5" y="9" width="5" height="5" fill="#5a7cc8" stroke="#2a4488" stroke-width="0.8"/></svg>
<div id="t38" style="position:absolute;left:739.70px;top:128px;font:normal 11px/14px 'Liberation Sans', sans-serif;color:#1f2f45;white-space:nowrap;transform:scaleX(1.0533);transform-origin:0 0;">Найти и</div>
<div id="t39" style="position:absolute;left:732.00px;top:141px;font:normal 11px/14px 'Liberation Sans', sans-serif;color:#1f2f45;white-space:nowrap;transform:scaleX(1.0097);transform-origin:0 0;">выделить</div>
<svg style="position:absolute;left:785px;top:146px;" width="6" height="4" viewBox="0 0 6 4"><path d="M0 0.5 L6 0.5 L3 3.5 Z" fill="#585f69"/></svg>
<div style="position:absolute;left:38px;top:88px;width:1px;height:589px;background:#5b6573"></div>
<div style="position:absolute;left:855px;top:88px;width:1px;height:589px;background:#5b6573"></div>
<div style="position:absolute;left:39px;top:173px;width:816px;height:1px;background:#9ea7b1"></div>
<div style="position:absolute;left:39px;top:174px;width:816px;height:3px;background:#e2e6eb"></div>
<div style="position:absolute;left:39px;top:176px;width:816px;height:1px;background:#b7bec7"></div>
<div style="position:absolute;left:39px;top:177px;width:816px;height:22px;background:#fff"></div>
<div style="position:absolute;left:39px;top:198px;width:816px;height:1px;background:#c3c8cf"></div>
<div style="position:absolute;left:39px;top:199px;width:816px;height:3px;background:linear-gradient(#fff 0 1px,#dfe9f5 1px)"></div>
<div style="position:absolute;left:39px;top:202px;width:816px;height:1px;background:#8a8fa0"></div>
<svg style="position:absolute;left:186px;top:186px;" width="9" height="6" viewBox="0 0 9 6"><path d="M0.5 0.5 L8.5 0.5 L4.5 4.8 Z" fill="#2b2b2b"/></svg>
<div style="position:absolute;left:200px;top:178px;width:84px;height:21px;background:#e0e4e9;border:1px solid #a3abb5;border-right:none;border-radius:11px 0 0 11px;box-sizing:border-box"></div>
<div style="position:absolute;left:205px;top:183px;width:9px;height:9px;background:linear-gradient(#8e949c,#b9bec5 55%,#f4f6f8 60%,#e6e9ec);border-radius:50%"></div>
<div style="position:absolute;left:284px;top:177px;width:1px;height:22px;background:#c5cbd2"></div>
<div style="position:absolute;left:839px;top:177px;width:16px;height:22px;background:#f1f3f6;border-left:1px solid #c5cbd2;box-sizing:border-box"></div>
<div id="t40" style="position:absolute;left:265.86px;top:180px;font:normal 15px/18px 'Liberation Sans', sans-serif;color:#151515;white-space:nowrap;font-weight:bold;transform:scaleX(1.2778);transform-origin:0 0;"><i style="font-family:'Liberation Serif'">f</i><span style="font-size:12px;margin-left:-1px"><i style="font-family:'Liberation Serif'">x</i></span></div>
<div id="t41" style="position:absolute;left:102.40px;top:182px;font:normal 12px/15px 'Liberation Sans', sans-serif;color:#000;white-space:nowrap;transform:scaleX(1.0264);transform-origin:0 0;">A1</div>
<div id="t42" style="position:absolute;left:293.80px;top:182px;font:normal 12px/15px 'Liberation Sans', sans-serif;color:#000;white-space:nowrap;transform:scaleX(1.1251);transform-origin:0 0;">Наименование товара</div>
<div style="position:absolute;left:39px;top:203px;width:800px;height:435px;background:#fff"></div>
<div style="position:absolute;left:65px;top:266px;width:774px;height:1px;background:#d9dcdf"></div>
<div style="position:absolute;left:65px;top:286px;width:774px;height:1px;background:#d9dcdf"></div>
<div style="position:absolute;left:65px;top:306px;width:774px;height:1px;background:#d9dcdf"></div>
<div style="position:absolute;left:65px;top:326px;width:774px;height:1px;background:#d9dcdf"></div>
<div style="position:absolute;left:65px;top:346px;width:774px;height:1px;background:#d9dcdf"></div>
<div style="position:absolute;left:65px;top:366px;width:774px;height:1px;background:#d9dcdf"></div>
<div style="position:absolute;left:65px;top:386px;width:774px;height:1px;background:#d9dcdf"></div>
<div style="position:absolute;left:65px;top:406px;width:774px;height:1px;background:#d9dcdf"></div>
<div style="position:absolute;left:65px;top:426px;width:774px;height:1px;background:#d9dcdf"></div>
<div style="position:absolute;left:65px;top:446px;width:774px;height:1px;background:#d9dcdf"></div>
<div style="position:absolute;left:65px;top:466px;width:774px;height:1px;background:#d9dcdf"></div>
<div style="position:absolute;left:65px;top:486px;width:774px;height:1px;background:#d9dcdf"></div>
<div style="position:absolute;left:65px;top:506px;width:774px;height:1px;background:#d9dcdf"></div>
<div style="position:absolute;left:65px;top:526px;width:774px;height:1px;background:#d9dcdf"></div>
<div style="position:absolute;left:65px;top:546px;width:774px;height:1px;background:#d9dcdf"></div>
<div style="position:absolute;left:65px;top:566px;width:774px;height:1px;background:#d9dcdf"></div>
<div style="position:absolute;left:65px;top:586px;width:774px;height:1px;background:#d9dcdf"></div>
<div style="position:absolute;left:65px;top:606px;width:774px;height:1px;background:#d9dcdf"></div>
<div style="position:absolute;left:65px;top:626px;width:774px;height:1px;background:#d9dcdf"></div>
<div style="position:absolute;left:225px;top:223px;width:1px;height:415px;background:#d9dcdf"></div>
<div style="position:absolute;left:386px;top:223px;width:1px;height:415px;background:#d9dcdf"></div>
<div style="position:absolute;left:450px;top:223px;width:1px;height:415px;background:#d9dcdf"></div>
<div style="position:absolute;left:514px;top:223px;width:1px;height:415px;background:#d9dcdf"></div>
<div style="position:absolute;left:625px;top:223px;width:1px;height:415px;background:#d9dcdf"></div>
<div style="position:absolute;left:689px;top:223px;width:1px;height:415px;background:#d9dcdf"></div>
<div style="position:absolute;left:753px;top:223px;width:1px;height:415px;background:#d9dcdf"></div>
<div style="position:absolute;left:817px;top:223px;width:1px;height:415px;background:#d9dcdf"></div>
<div style="position:absolute;left:39px;top:203px;width:800px;height:19px;background:linear-gradient(#f6f7f9,#e4e8ed)"></div>
<div style="position:absolute;left:39px;top:222px;width:800px;height:1px;background:#b6bcc5"></div>
<div style="position:absolute;left:39px;top:203px;width:25px;height:19px;background:#dfe3e8"></div>
<svg style="position:absolute;left:50px;top:208px;" width="12" height="12" viewBox="0 0 12 12"><path d="M11 1 L11 11 L1 11 Z" fill="#b4b9c0"/></svg>
<div style="position:absolute;left:65px;top:203px;width:560px;height:19px;background:linear-gradient(#fbd665,#fcd96a 40%,#fde27a 60%,#fde581)"></div>
<div style="position:absolute;left:39px;top:222px;width:586px;height:1px;background:#d49a45"></div>
<div style="position:absolute;left:64px;top:203px;width:1px;height:20px;background:#c9a05a"></div>
<div style="position:absolute;left:225px;top:203px;width:1px;height:20px;background:#d9a050"></div>
<div style="position:absolute;left:386px;top:203px;width:1px;height:20px;background:#d9a050"></div>
<div style="position:absolute;left:450px;top:203px;width:1px;height:20px;background:#d9a050"></div>
<div style="position:absolute;left:514px;top:203px;width:1px;height:20px;background:#d9a050"></div>
<div style="position:absolute;left:625px;top:203px;width:1px;height:20px;background:#d9a050"></div>
<div style="position:absolute;left:689px;top:203px;width:1px;height:20px;background:#bcc2ca"></div>
<div style="position:absolute;left:753px;top:203px;width:1px;height:20px;background:#bcc2ca"></div>
<div style="position:absolute;left:817px;top:203px;width:1px;height:20px;background:#bcc2ca"></div>
<div style="position:absolute;left:39px;top:223px;width:25px;height:415px;background:#e1e5eb"></div>
<div style="position:absolute;left:64px;top:223px;width:1px;height:415px;background:#bcc2ca"></div>
<div style="position:absolute;left:39px;top:266px;width:25px;height:1px;background:#bfc5cd"></div>
<div style="position:absolute;left:39px;top:286px;width:25px;height:1px;background:#bfc5cd"></div>
<div style="position:absolute;left:39px;top:306px;width:25px;height:1px;background:#bfc5cd"></div>
<div style="position:absolute;left:39px;top:326px;width:25px;height:1px;background:#bfc5cd"></div>
<div style="position:absolute;left:39px;top:346px;width:25px;height:1px;background:#bfc5cd"></div>
<div style="position:absolute;left:39px;top:366px;width:25px;height:1px;background:#bfc5cd"></div>
<div style="position:absolute;left:39px;top:386px;width:25px;height:1px;background:#bfc5cd"></div>
<div style="position:absolute;left:39px;top:406px;width:25px;height:1px;background:#bfc5cd"></div>
<div style="position:absolute;left:39px;top:426px;width:25px;height:1px;background:#bfc5cd"></div>
<div style="position:absolute;left:39px;top:446px;width:25px;height:1px;background:#bfc5cd"></div>
<div style="position:absolute;left:39px;top:466px;width:25px;height:1px;background:#bfc5cd"></div>
<div style="position:absolute;left:39px;top:486px;width:25px;height:1px;background:#bfc5cd"></div>
<div style="position:absolute;left:39px;top:506px;width:25px;height:1px;background:#bfc5cd"></div>
<div style="position:absolute;left:39px;top:526px;width:25px;height:1px;background:#bfc5cd"></div>
<div style="position:absolute;left:39px;top:546px;width:25px;height:1px;background:#bfc5cd"></div>
<div style="position:absolute;left:39px;top:566px;width:25px;height:1px;background:#bfc5cd"></div>
<div style="position:absolute;left:39px;top:586px;width:25px;height:1px;background:#bfc5cd"></div>
<div style="position:absolute;left:39px;top:606px;width:25px;height:1px;background:#bfc5cd"></div>
<div style="position:absolute;left:39px;top:626px;width:25px;height:1px;background:#bfc5cd"></div>
<div style="position:absolute;left:39px;top:223px;width:25px;height:163px;background:#fdd462"></div>
<div style="position:absolute;left:64px;top:223px;width:1px;height:164px;background:#d49a45"></div>
<div style="position:absolute;left:39px;top:266px;width:26px;height:1px;background:#d49a45"></div>
<div style="position:absolute;left:39px;top:286px;width:26px;height:1px;background:#d49a45"></div>
<div style="position:absolute;left:39px;top:306px;width:26px;height:1px;background:#d49a45"></div>
<div style="position:absolute;left:39px;top:326px;width:26px;height:1px;background:#d49a45"></div>
<div style="position:absolute;left:39px;top:346px;width:26px;height:1px;background:#d49a45"></div>
<div style="position:absolute;left:39px;top:366px;width:26px;height:1px;background:#d49a45"></div>
<div style="position:absolute;left:39px;top:386px;width:26px;height:1px;background:#d49a45"></div>
<div style="position:absolute;left:65px;top:223px;width:160px;height:43px;background:#ffff00"></div>
<div style="position:absolute;left:226px;top:223px;width:399px;height:43px;background:#b5d75b"></div>
<div style="position:absolute;left:65px;top:266px;width:160px;height:118px;background:#72be8c"></div>
<div style="position:absolute;left:226px;top:266px;width:399px;height:118px;background:#b9dbfc"></div>
<div style="position:absolute;left:65px;top:266px;width:561px;height:1px;background:#1f3a60"></div>
<div style="position:absolute;left:65px;top:286px;width:561px;height:1px;background:#1f3a60"></div>
<div style="position:absolute;left:65px;top:306px;width:561px;height:1px;background:#1f3a60"></div>
<div style="position:absolute;left:65px;top:326px;width:561px;height:1px;background:#1f3a60"></div>
<div style="position:absolute;left:65px;top:346px;width:561px;height:1px;background:#1f3a60"></div>
<div style="position:absolute;left:65px;top:366px;width:561px;height:1px;background:#1f3a60"></div>
<div style="position:absolute;left:225px;top:223px;width:1px;height:162px;background:#1f3a60"></div>
<div style="position:absolute;left:386px;top:223px;width:1px;height:162px;background:#1f3a60"></div>
<div style="position:absolute;left:450px;top:223px;width:1px;height:162px;background:#1f3a60"></div>
<div style="position:absolute;left:514px;top:223px;width:1px;height:162px;background:#1f3a60"></div>
<div style="position:absolute;left:623px;top:223px;width:1px;height:43px;background:#ffff00"></div>
<div style="position:absolute;left:624px;top:223px;width:1px;height:162px;background:#1010e0"></div>
<div style="position:absolute;left:625px;top:223px;width:1px;height:164px;background:#fff"></div>
<div style="position:absolute;left:626px;top:223px;width:1px;height:165px;background:#000"></div>
<div style="position:absolute;left:65px;top:223px;width:561px;height:1px;background:#1010e0"></div>
<div style="position:absolute;left:226px;top:224px;width:397px;height:1px;background:#f8f000"></div>
<div style="position:absolute;left:65px;top:223px;width:1px;height:162px;background:#1010e0"></div>
<div style="position:absolute;left:65px;top:384px;width:160px;height:1px;background:#80d356"></div>
<div style="position:absolute;left:65px;top:385px;width:160px;height:1px;background:#4c4cbc"></div>
<div style="position:absolute;left:226px;top:384px;width:399px;height:1px;background:#fff"></div>
<div style="position:absolute;left:226px;top:385px;width:399px;height:1px;background:#000"></div>
<div style="position:absolute;left:65px;top:386px;width:561px;height:1px;background:#fff"></div>
<div style="position:absolute;left:65px;top:387px;width:562px;height:1px;background:#000"></div>
<div id="t43" style="position:absolute;left:48.00px;top:250px;font:normal 13px/16px 'Liberation Sans', sans-serif;color:#1e1e1e;white-space:nowrap;">1</div>
<div id="t44" style="position:absolute;left:48.00px;top:270px;font:normal 13px/16px 'Liberation Sans', sans-serif;color:#1e1e1e;white-space:nowrap;">2</div>
<div id="t45" style="position:absolute;left:48.00px;top:290px;font:normal 13px/16px 'Liberation Sans', sans-serif;color:#1e1e1e;white-space:nowrap;">3</div>
<div id="t46" style="position:absolute;left:48.00px;top:310px;font:normal 13px/16px 'Liberation Sans', sans-serif;color:#1e1e1e;white-space:nowrap;">4</div>
<div id="t47" style="position:absolute;left:48.00px;top:330px;font:normal 13px/16px 'Liberation Sans', sans-serif;color:#1e1e1e;white-space:nowrap;">5</div>
<div id="t48" style="position:absolute;left:48.00px;top:350px;font:normal 13px/16px 'Liberation Sans', sans-serif;color:#1e1e1e;white-space:nowrap;">6</div>
<div id="t49" style="position:absolute;left:48.00px;top:370px;font:normal 13px/16px 'Liberation Sans', sans-serif;color:#1e1e1e;white-space:nowrap;">7</div>
<div id="t50" style="position:absolute;left:48.00px;top:390px;font:normal 13px/16px 'Liberation Sans', sans-serif;color:#1e1e1e;white-space:nowrap;">8</div>
<div id="t51" style="position:absolute;left:48.00px;top:410px;font:normal 13px/16px 'Liberation Sans', sans-serif;color:#1e1e1e;white-space:nowrap;">9</div>
<div id="t52" style="position:absolute;left:44.39px;top:430px;font:normal 13px/16px 'Liberation Sans', sans-serif;color:#1e1e1e;white-space:nowrap;">10</div>
<div id="t53" style="position:absolute;left:44.87px;top:450px;font:normal 13px/16px 'Liberation Sans', sans-serif;color:#1e1e1e;white-space:nowrap;">11</div>
<div id="t54" style="position:absolute;left:44.39px;top:470px;font:normal 13px/16px 'Liberation Sans', sans-serif;color:#1e1e1e;white-space:nowrap;">12</div>
<div id="t55" style="position:absolute;left:44.39px;top:490px;font:normal 13px/16px 'Liberation Sans', sans-serif;color:#1e1e1e;white-space:nowrap;">13</div>
<div id="t56" style="position:absolute;left:44.39px;top:510px;font:normal 13px/16px 'Liberation Sans', sans-serif;color:#1e1e1e;white-space:nowrap;">14</div>
<div id="t57" style="position:absolute;left:44.39px;top:530px;font:normal 13px/16px 'Liberation Sans', sans-serif;color:#1e1e1e;white-space:nowrap;">15</div>
<div id="t58" style="position:absolute;left:44.39px;top:550px;font:normal 13px/16px 'Liberation Sans', sans-serif;color:#1e1e1e;white-space:nowrap;">16</div>
<div id="t59" style="position:absolute;left:44.39px;top:570px;font:normal 13px/16px 'Liberation Sans', sans-serif;color:#1e1e1e;white-space:nowrap;">17</div>
<div id="t60" style="position:absolute;left:44.39px;top:590px;font:normal 13px/16px 'Liberation Sans', sans-serif;color:#1e1e1e;white-space:nowrap;">18</div>
<div id="t61" style="position:absolute;left:44.39px;top:610px;font:normal 13px/16px 'Liberation Sans', sans-serif;color:#1e1e1e;white-space:nowrap;">19</div>
<div id="t62" style="position:absolute;left:44.39px;top:630px;font:normal 13px/16px 'Liberation Sans', sans-serif;color:#1e1e1e;white-space:nowrap;">20</div>
<div id="t63" style="position:absolute;left:140.50px;top:206px;font:normal 13px/16px 'Liberation Sans', sans-serif;color:#222;white-space:nowrap;">A</div>
<div id="t64" style="position:absolute;left:301.50px;top:206px;font:normal 13px/16px 'Liberation Sans', sans-serif;color:#222;white-space:nowrap;">B</div>
<div id="t65" style="position:absolute;left:414.00px;top:206px;font:normal 13px/16px 'Liberation Sans', sans-serif;color:#222;white-space:nowrap;">C</div>
<div id="t66" style="position:absolute;left:477.50px;top:206px;font:normal 13px/16px 'Liberation Sans', sans-serif;color:#222;white-space:nowrap;">D</div>
<div id="t67" style="position:absolute;left:565.00px;top:206px;font:normal 13px/16px 'Liberation Sans', sans-serif;color:#222;white-space:nowrap;">E</div>
<div id="t68" style="position:absolute;left:75.00px;top:251px;font:normal 12px/15px 'Liberation Sans', sans-serif;color:#000;white-space:nowrap;transform:scaleX(1.1267);transform-origin:0 0;">Наименование товара</div>
<div id="t69" style="position:absolute;left:269.30px;top:251px;font:normal 12px/15px 'Liberation Sans', sans-serif;color:#000;white-space:nowrap;transform:scaleX(1.1271);transform-origin:0 0;">Количество</div>
<div id="t70" style="position:absolute;left:403.50px;top:251px;font:normal 12px/15px 'Liberation Sans', sans-serif;color:#000;white-space:nowrap;transform:scaleX(0.9939);transform-origin:0 0;">Цена</div>
<div id="t71" style="position:absolute;left:462.00px;top:251px;font:normal 12px/15px 'Liberation Sans', sans-serif;color:#000;white-space:nowrap;transform:scaleX(1.0518);transform-origin:0 0;">Сумма</div>
<div id="t72" style="position:absolute;left:517.10px;top:231px;font:normal 12px/15px 'Liberation Sans', sans-serif;color:#000;white-space:nowrap;transform:scaleX(1.1270);transform-origin:0 0;">Удельный вес от</div>
<div id="t73" style="position:absolute;left:526.70px;top:251px;font:normal 12px/15px 'Liberation Sans', sans-serif;color:#000;white-space:nowrap;transform:scaleX(1.1262);transform-origin:0 0;">общей суммы</div>
<div id="t74" style="position:absolute;left:67.60px;top:271px;font:normal 12px/15px 'Liberation Sans', sans-serif;color:#000;white-space:nowrap;transform:scaleX(1.1068);transform-origin:0 0;">Картофель</div>
<div id="t75" style="position:absolute;left:369.27px;top:270px;font:normal 13px/16px 'Liberation Sans', sans-serif;color:#000;white-space:nowrap;">25</div>
<div id="t76" style="position:absolute;left:433.27px;top:270px;font:normal 13px/16px 'Liberation Sans', sans-serif;color:#000;white-space:nowrap;">18</div>
<div id="t77" style="position:absolute;left:490.04px;top:270px;font:normal 13px/16px 'Liberation Sans', sans-serif;color:#000;white-space:nowrap;">450</div>
<div id="t78" style="position:absolute;left:555.70px;top:270px;font:normal 13px/16px 'Liberation Sans', sans-serif;color:#000;white-space:nowrap;">0,066845</div>
<div id="t79" style="position:absolute;left:67.60px;top:291px;font:normal 12px/15px 'Liberation Sans', sans-serif;color:#000;white-space:nowrap;transform:scaleX(1.0454);transform-origin:0 0;">Рыба</div>
<div id="t80" style="position:absolute;left:376.50px;top:290px;font:normal 13px/16px 'Liberation Sans', sans-serif;color:#000;white-space:nowrap;">3</div>
<div id="t81" style="position:absolute;left:426.04px;top:290px;font:normal 13px/16px 'Liberation Sans', sans-serif;color:#000;white-space:nowrap;">164</div>
<div id="t82" style="position:absolute;left:490.04px;top:290px;font:normal 13px/16px 'Liberation Sans', sans-serif;color:#000;white-space:nowrap;">492</div>
<div id="t83" style="position:absolute;left:548.50px;top:290px;font:normal 13px/16px 'Liberation Sans', sans-serif;color:#000;white-space:nowrap;">0,0730838</div>
<div id="t84" style="position:absolute;left:67.60px;top:311px;font:normal 12px/15px 'Liberation Sans', sans-serif;color:#000;white-space:nowrap;transform:scaleX(1.0800);transform-origin:0 0;">Мясо</div>
<div id="t85" style="position:absolute;left:369.27px;top:310px;font:normal 13px/16px 'Liberation Sans', sans-serif;color:#000;white-space:nowrap;">20</div>
<div id="t86" style="position:absolute;left:426.04px;top:310px;font:normal 13px/16px 'Liberation Sans', sans-serif;color:#000;white-space:nowrap;">267</div>
<div id="t87" style="position:absolute;left:482.81px;top:310px;font:normal 13px/16px 'Liberation Sans', sans-serif;color:#000;white-space:nowrap;">5340</div>
<div id="t88" style="position:absolute;left:548.50px;top:310px;font:normal 13px/16px 'Liberation Sans', sans-serif;color:#000;white-space:nowrap;">0,7932264</div>
<div id="t89" style="position:absolute;left:67.60px;top:331px;font:normal 12px/15px 'Liberation Sans', sans-serif;color:#000;white-space:nowrap;transform:scaleX(1.0225);transform-origin:0 0;">Сахар</div>
<div id="t90" style="position:absolute;left:376.50px;top:330px;font:normal 13px/16px 'Liberation Sans', sans-serif;color:#000;white-space:nowrap;">3</div>
<div id="t91" style="position:absolute;left:433.27px;top:330px;font:normal 13px/16px 'Liberation Sans', sans-serif;color:#000;white-space:nowrap;">50</div>
<div id="t92" style="position:absolute;left:490.04px;top:330px;font:normal 13px/16px 'Liberation Sans', sans-serif;color:#000;white-space:nowrap;">150</div>
<div id="t93" style="position:absolute;left:555.70px;top:330px;font:normal 13px/16px 'Liberation Sans', sans-serif;color:#000;white-space:nowrap;">0,022282</div>
<div id="t94" style="position:absolute;left:67.60px;top:351px;font:normal 12px/15px 'Liberation Sans', sans-serif;color:#000;white-space:nowrap;transform:scaleX(1.0546);transform-origin:0 0;">Чай</div>
<div id="t95" style="position:absolute;left:365.66px;top:350px;font:normal 13px/16px 'Liberation Sans', sans-serif;color:#000;white-space:nowrap;">0,3</div>
<div id="t96" style="position:absolute;left:418.81px;top:350px;font:normal 13px/16px 'Liberation Sans', sans-serif;color:#000;white-space:nowrap;">1000</div>
<div id="t97" style="position:absolute;left:490.04px;top:350px;font:normal 13px/16px 'Liberation Sans', sans-serif;color:#000;white-space:nowrap;">300</div>
<div id="t98" style="position:absolute;left:555.70px;top:350px;font:normal 13px/16px 'Liberation Sans', sans-serif;color:#000;white-space:nowrap;">0,044563</div>
<div id="t99" style="position:absolute;left:67.60px;top:371px;font:bold 12px/15px 'Liberation Sans', sans-serif;color:#000;white-space:nowrap;transform:scaleX(0.9353);transform-origin:0 0;">ВСЕГО</div>
<div id="t100" style="position:absolute;left:482.81px;top:370px;font:bold 13px/16px 'Liberation Sans', sans-serif;color:#000;white-space:nowrap;">6732</div>
<div style="position:absolute;left:839px;top:203px;width:16px;height:435px;background:linear-gradient(90deg,#dfe3e8,#e9ecf0 50%,#dfe3e8)"></div>
<div style="position:absolute;left:839px;top:203px;width:1px;height:435px;background:#c9cfd6"></div>
<svg style="position:absolute;left:842px;top:627px;" width="9" height="5" viewBox="0 0 9 5"><path d="M0 0 L9 0 L4.5 5 Z" fill="#5b636e"/></svg>
<div style="position:absolute;left:840px;top:198px;width:14px;height:13px;background:linear-gradient(#f4f6f8,#e4e7eb);border:1px solid #8d959f;box-sizing:border-box"></div>
<div style="position:absolute;left:841px;top:202px;width:12px;height:2px;background:#9aa2ac"></div>
<svg style="position:absolute;left:843px;top:217px;" width="9" height="5" viewBox="0 0 9 5"><path d="M0 5 L9 5 L4.5 0 Z" fill="#5b636e"/></svg>
<div style="position:absolute;left:840px;top:228px;width:14px;height:60px;background:linear-gradient(90deg,#f7f9fb,#e8ebef);border:1px solid #a9b1bb;border-radius:2px;box-sizing:border-box"></div>
<div style="position:absolute;left:39px;top:638px;width:800px;height:16px;background:linear-gradient(#e4e8ed,#dde2e8)"></div>
<div style="position:absolute;left:39px;top:638px;width:800px;height:1px;background:#aeb6c0"></div>
<div style="position:absolute;left:39px;top:638px;width:63px;height:15px;background:linear-gradient(#e8ebef,#dadfe5);border-top:1px solid #aeb6c0;border-right:1px solid #aeb6c0;box-sizing:border-box"></div>
<svg style="position:absolute;left:45px;top:642px;" width="7" height="8" viewBox="0 0 7 8"><rect x="0" y="0" width="1.5" height="8" fill="#4a525c"/><path d="M7 0 L7 8 L2 4 Z" fill="#4a525c"/></svg>
<svg style="position:absolute;left:61px;top:642px;" width="5" height="8" viewBox="0 0 5 8"><path d="M5 0 L5 8 L0 4 Z" fill="#4a525c"/></svg>
<svg style="position:absolute;left:75px;top:642px;" width="5" height="8" viewBox="0 0 5 8"><path d="M0 0 L0 8 L5 4 Z" fill="#4a525c"/></svg>
<svg style="position:absolute;left:88px;top:642px;" width="7" height="8" viewBox="0 0 7 8"><path d="M0 0 L0 8 L5 4 Z" fill="#4a525c"/><rect x="5.5" y="0" width="1.5" height="8" fill="#4a525c"/></svg>
<div style="position:absolute;left:102px;top:638px;width:418px;height:16px;background:linear-gradient(#e9ecef,#dfe3e8)"></div>
<svg style="position:absolute;left:100px;top:637px;" width="420" height="17" viewBox="0 0 420 17">
<path d="M2 1 L65 1 L51 16 L2 16 Z" fill="#fff"/>
<path d="M65 1.5 H420" stroke="#9aa3ae"/>
<path d="M51 16 L65 1.5 M104 16 L117.5 1.5 M157 16 L170.5 1.5 M189.6 16 L204 1.5" stroke="#8e98a4" fill="none"/></svg>
<div id="t101" style="position:absolute;left:110.90px;top:640px;font:bold 12px/15px 'Liberation Sans', sans-serif;color:#1e1e1e;white-space:nowrap;transform:scaleX(1.0071);transform-origin:0 0;">Лист1</div>
<div id="t102" style="position:absolute;left:165.00px;top:640px;font:normal 12px/15px 'Liberation Sans', sans-serif;color:#333;white-space:nowrap;transform:scaleX(1.0038);transform-origin:0 0;">Лист2</div>
<div id="t103" style="position:absolute;left:217.80px;top:640px;font:normal 12px/15px 'Liberation Sans', sans-serif;color:#333;white-space:nowrap;transform:scaleX(1.0038);transform-origin:0 0;">Лист3</div>
<svg style="position:absolute;left:272px;top:640px;" width="15" height="13" viewBox="0 0 15 13"><path d="M3.5 3.5 H13.5 V10.5 C11 9.5, 9 12.5, 6 11.5 L3.5 11.5 Z" fill="#dce8f6" stroke="#4a6fb8"/><path d="M3 0 V6 M0 3 H6 M1 1 L5 5 M5 1 L1 5" stroke="#f0a020" stroke-width="1.1"/><circle cx="3" cy="3" r="1.3" fill="#fff3b0"/></svg>
<div style="position:absolute;left:520px;top:640px;width:7px;height:14px;background:#fff;border:1px solid #6f7780;box-sizing:border-box"></div>
<div style="position:absolute;left:523px;top:643px;width:1px;height:8px;background:#6f7780"></div>
<svg style="position:absolute;left:532px;top:642px;" width="6" height="9" viewBox="0 0 6 9"><path d="M6 0 L6 9 L0 4.5 Z" fill="#4a525c"/></svg>
<div style="position:absolute;left:544px;top:640px;width:236px;height:13px;background:linear-gradient(#f7f9fb,#e6eaef);border:1px solid #b9c0c9;border-radius:2px;box-sizing:border-box"></div>
<svg style="position:absolute;left:658px;top:643px;" width="8" height="8" viewBox="0 0 8 8"><path d="M0.5 0 V8 M2.5 0 V8 M4.5 0 V8 M6.5 0 V8" stroke="#8a939e"/></svg>
<svg style="position:absolute;left:820px;top:642px;" width="6" height="9" viewBox="0 0 6 9"><path d="M0 0 L0 9 L6 4.5 Z" fill="#4a525c"/></svg>
<div style="position:absolute;left:831px;top:639px;width:8px;height:15px;background:#fff;border:1px solid #6f7780;box-sizing:border-box"></div>
<div style="position:absolute;left:834px;top:642px;width:1px;height:9px;background:#6f7780"></div>
<div style="position:absolute;left:839px;top:638px;width:16px;height:16px;background:#e3e6ea"></div>
<div style="position:absolute;left:39px;top:653px;width:816px;height:23px;background:linear-gradient(#8f98a3 0 1px,#f3f5f7 1px 2px,#e6e9ec 2px,#e2e5e8 7px,#d3d7dc 10px,#cdd1d6 100%)"></div>
<div style="position:absolute;left:93px;top:656px;width:1px;height:19px;background:#b3bac4;box-shadow:1px 0 0 #f6f8fa"></div>
<div style="position:absolute;left:128px;top:656px;width:1px;height:19px;background:#b3bac4;box-shadow:1px 0 0 #f6f8fa"></div>
<div style="position:absolute;left:597px;top:656px;width:1px;height:19px;background:#b3bac4;box-shadow:1px 0 0 #f6f8fa"></div>
<div id="t104" style="position:absolute;left:47.60px;top:658px;font:normal 11px/14px 'Liberation Sans', sans-serif;color:#333;white-space:nowrap;transform:scaleX(1.0517);transform-origin:0 0;">Готово</div>
<svg style="position:absolute;left:103px;top:657px;" width="16" height="14" viewBox="0 0 16 14"><rect x="0.5" y="2.5" width="15" height="11" fill="#fff" stroke="#3465b0"/><rect x="1" y="3" width="14" height="3" fill="#5d8ad4"/><path d="M3 8 H7 M9 8 H13 M3 10.5 H7 M9 10.5 H13" stroke="#5d8ad4"/><circle cx="3.5" cy="3" r="3" fill="#e2702a"/></svg>
<div id="t105" style="position:absolute;left:283.40px;top:658px;font:normal 11px/14px 'Liberation Sans', sans-serif;color:#333;white-space:nowrap;transform:scaleX(0.9800);transform-origin:0 0;">Среднее: 682,5590909</div>
<div id="t106" style="position:absolute;left:413.00px;top:658px;font:normal 11px/14px 'Liberation Sans', sans-serif;color:#333;white-space:nowrap;transform:scaleX(1.0297);transform-origin:0 0;">Количество: 33</div>
<div id="t107" style="position:absolute;left:508.90px;top:658px;font:normal 11px/14px 'Liberation Sans', sans-serif;color:#333;white-space:nowrap;transform:scaleX(0.9749);transform-origin:0 0;">Сумма: 15016,3</div>
<div style="position:absolute;left:603px;top:657px;width:19px;height:17px;background:linear-gradient(#fde58c,#fcdc70);border:1px solid #d6a548;border-radius:2px;box-sizing:border-box"></div>
<svg style="position:absolute;left:606px;top:660px;" width="13" height="11" viewBox="0 0 13 11"><rect x="0.5" y="0.5" width="12" height="10" fill="#fff" stroke="#555"/><path d="M0.5 3.5 H12.5 M0.5 6.5 H12.5 M4.5 0.5 V10.5 M8.5 0.5 V10.5" stroke="#555"/></svg>
<svg style="position:absolute;left:624px;top:659px;" width="14" height="13" viewBox="0 0 14 13"><rect x="0.5" y="0.5" width="13" height="12" fill="#f3f5f8" stroke="#5a626c"/><rect x="3.5" y="3.5" width="7" height="6" fill="#fff" stroke="#5a626c"/></svg>
<svg style="position:absolute;left:643px;top:659px;" width="15" height="13" viewBox="0 0 15 13"><rect x="0.5" y="0.5" width="14" height="12" fill="#f3f5f8" stroke="#5a626c"/><path d="M7.5 0.5 V12.5 M0.5 7.5 H7.5" stroke="#5a626c"/><rect x="8" y="1" width="6" height="11" fill="#9aa3ae"/></svg>
<div id="t108" style="position:absolute;left:668.00px;top:658px;font:normal 12px/15px 'Liberation Sans', sans-serif;color:#333;white-space:nowrap;transform:scaleX(0.8962);transform-origin:0 0;">100%</div>
<svg style="position:absolute;left:704px;top:657px;" width="16" height="16" viewBox="0 0 16 16"><circle cx="8" cy="8" r="7.3" fill="#fbfcfd" stroke="#6f7780"/><rect x="4" y="7" width="8" height="2" fill="#3a424c"/></svg>
<div style="position:absolute;left:720px;top:665px;width:101px;height:1px;background:repeating-linear-gradient(90deg,#9aa2ac 0 1px,transparent 1px 2px)"></div>
<svg style="position:absolute;left:765px;top:658px;" width="10" height="14" viewBox="0 0 10 14"><path d="M0.5 0.5 H9.5 V9 L5 13.5 L0.5 9 Z" fill="#f7f9fb" stroke="#6f7780"/></svg>
<svg style="position:absolute;left:821px;top:657px;" width="16" height="16" viewBox="0 0 16 16"><circle cx="8" cy="8" r="7.3" fill="#fbfcfd" stroke="#6f7780"/><rect x="4" y="7" width="8" height="2" fill="#3a424c"/><rect x="7" y="4" width="2" height="8" fill="#3a424c"/></svg>
<svg style="position:absolute;left:843px;top:664px;" width="11" height="11" viewBox="0 0 11 11"><g fill="#a9b1bb"><rect x="8" y="0" width="2" height="2"/><rect x="8" y="4" width="2" height="2"/><rect x="4" y="4" width="2" height="2"/><rect x="8" y="8" width="2" height="2"/><rect x="4" y="8" width="2" height="2"/><rect x="0" y="8" width="2" height="2"/></g></svg>
<div style="position:absolute;left:38px;top:676px;width:818px;height:1px;background:#5b6573"></div>
<div style="position:absolute;left:600px;top:182px;width:249px;height:51px;background:#fff;border:1px solid #a7aeb7;border-radius:3px;box-sizing:border-box;box-shadow:1px 1px 2px rgba(0,0,0,0.15)"></div>
<div style="position:absolute;left:602px;top:184px;width:101px;height:22px;background:#fff;border:1px solid #c4cbd4;box-sizing:border-box"></div>
<div style="position:absolute;left:662px;top:185px;width:1px;height:20px;background:#c4cbd4"></div>
<div id="t109" style="position:absolute;left:605.50px;top:187px;font:normal 11px/14px 'Liberation Sans', sans-serif;color:#000;white-space:nowrap;transform:scaleX(1.0511);transform-origin:0 0;">Calibri</div>
<svg style="position:absolute;left:653px;top:194px;" width="6" height="4" viewBox="0 0 6 4"><path d="M0 0.5 L6 0.5 L3 3.5 Z" fill="#585f69"/></svg>
<div id="t110" style="position:absolute;left:665.70px;top:187px;font:normal 11px/14px 'Liberation Sans', sans-serif;color:#000;white-space:nowrap;transform:scaleX(0.9379);transform-origin:0 0;">11</div>
<svg style="position:absolute;left:693px;top:194px;" width="6" height="4" viewBox="0 0 6 4"><path d="M0 0.5 L6 0.5 L3 3.5 Z" fill="#585f69"/></svg>
<div id="t111" style="position:absolute;left:707.60px;top:186px;font:bold 16px/19px 'Liberation Sans', sans-serif;color:#222;white-space:nowrap;font-family:'Liberation Serif';">A</div>
<svg style="position:absolute;left:717px;top:186px;" width="7" height="4" viewBox="0 0 7 4"><path d="M0 4 L3.5 0 L7 4 Z" fill="#2a64c0"/></svg>
<div id="t112" style="position:absolute;left:729.20px;top:190px;font:bold 12px/15px 'Liberation Sans', sans-serif;color:#222;white-space:nowrap;font-family:'Liberation Serif';transform:scaleX(0.9444);transform-origin:0 0;">A</div>
<svg style="position:absolute;left:736px;top:189px;" width="7" height="4" viewBox="0 0 7 4"><path d="M0 0 L7 0 L3.5 4 Z" fill="#2a64c0"/></svg>
<svg style="position:absolute;left:750px;top:187px;" width="17" height="16" viewBox="0 0 17 16">
<rect x="0.5" y="0.5" width="15" height="8" fill="#3d6fc4" stroke="#244a8a"/>
<ellipse cx="8" cy="4.5" rx="4" ry="2.6" fill="none" stroke="#cfe0f8" stroke-width="0.9"/>
<ellipse cx="12" cy="10" rx="3.5" ry="1.5" fill="#f2b84a" stroke="#b07a20" stroke-width="0.6"/>
<ellipse cx="12" cy="12.5" rx="3.5" ry="1.5" fill="#f2b84a" stroke="#b07a20" stroke-width="0.6"/>
<ellipse cx="12" cy="15" rx="3.5" ry="1.2" fill="#f2b84a" stroke="#b07a20" stroke-width="0.6"/>
<ellipse cx="4.5" cy="11.5" rx="3" ry="1.3" fill="#f2b84a" stroke="#b07a20" stroke-width="0.6"/></svg>
<svg style="position:absolute;left:772px;top:194px;" width="6" height="4" viewBox="0 0 6 4"><path d="M0 0.5 L6 0.5 L3 3.5 Z" fill="#585f69"/></svg>
<div id="t113" style="position:absolute;left:786.20px;top:188px;font:normal 13px/16px 'Liberation Sans', sans-serif;color:#222;white-space:nowrap;transform:scaleX(0.9167);transform-origin:0 0;">%</div>
<div id="t114" style="position:absolute;left:806.30px;top:188px;font:normal 13px/16px 'Liberation Sans', sans-serif;color:#222;white-space:nowrap;transform:scaleX(0.6990);transform-origin:0 0;">000</div>
<svg style="position:absolute;left:828px;top:187px;" width="16" height="15" viewBox="0 0 16 15"><rect x="0.5" y="0.5" width="15" height="14" fill="#fff" stroke="#2f4f8f"/>
<path d="M0.5 3.5 H15.5 M0.5 11.5 H15.5 M8 0.5 V3.5 M8 11.5 V14.5" stroke="#5b84c8"/>
<rect x="1" y="1" width="14" height="2" fill="#dfe8f6"/><rect x="1" y="12" width="14" height="2" fill="#dfe8f6"/>
<text x="8" y="10.5" text-anchor="middle" font-family="Liberation Serif" font-weight="bold" font-size="11" fill="#111">a</text>
<path d="M1.5 7.5 H4.5 M11.5 7.5 H14.5" stroke="#222"/><path d="M3.5 6 L5 7.5 L3.5 9 M12.5 6 L11 7.5 L12.5 9" stroke="#222" fill="none" stroke-width="0.8"/></svg>
<div id="t115" style="position:absolute;left:606.60px;top:210px;font:bold 15px/18px 'Liberation Sans', sans-serif;color:#111;white-space:nowrap;font-family:'Liberation Serif';transform:scaleX(0.8333);transform-origin:0 0;">Ж</div>
<div id="t116" style="position:absolute;left:630.04px;top:210px;font:bold 15px/18px 'Liberation Sans', sans-serif;color:#111;white-space:nowrap;font-family:'Liberation Serif';font-style:italic;transform:scaleX(1.0417);transform-origin:0 0;">К</div>
<div style="position:absolute;left:646px;top:209px;width:22px;height:22px;background:linear-gradient(#fde58c,#fcdc70);border:1px solid #d6a548;border-radius:3px;box-sizing:border-box"></div>
<svg style="position:absolute;left:650px;top:214px;" width="15" height="14" viewBox="0 0 15 14"><rect x="0" y="0" width="14" height="1" fill="#111"/><rect x="2" y="2" width="10" height="1" fill="#111"/><rect x="0" y="4" width="14" height="1" fill="#111"/><rect x="2" y="6" width="10" height="1" fill="#111"/><rect x="0" y="8" width="14" height="1" fill="#111"/><rect x="2" y="10" width="10" height="1" fill="#111"/></svg>
<svg style="position:absolute;left:671px;top:212px;" width="17" height="16" viewBox="0 0 17 16"><path d="M2.5 7 L7.5 2 L13 7.5 L8 12.5 Z" fill="#fff" stroke="#2c3f8c" stroke-width="1"/>
<path d="M7.5 2 L13 7.5 L8 12.5 L5.5 10 Z" fill="#c9dcf4"/>
<path d="M2.5 7 L7.5 2 L13 7.5 L8 12.5 Z" fill="none" stroke="#2c3f8c" stroke-width="1"/>
<path d="M6 3.5 C5.5 0.5, 9.5 0.5, 9 3.5" fill="none" stroke="#2c3f8c" stroke-width="0.9"/>
<path d="M7.5 2.5 V7" stroke="#777" stroke-width="1.4"/>
<path d="M12.5 6 C15.5 6.5, 16 9, 14.5 12 C14 10, 13.5 8.5, 12.5 8 Z" fill="#3f6fd0"/>
<rect x="0" y="12" width="16" height="4" fill="#2e8b3a"/></svg>
<svg style="position:absolute;left:693px;top:219px;" width="6" height="4" viewBox="0 0 6 4"><path d="M0 0.5 L6 0.5 L3 3.5 Z" fill="#585f69"/></svg>
<div id="t117" style="position:absolute;left:707.50px;top:209px;font:bold 15px/18px 'Liberation Sans', sans-serif;color:#2b3f9a;white-space:nowrap;font-family:'Liberation Serif';transform:scaleX(0.9455);transform-origin:0 0;">A</div>
<div style="position:absolute;left:705px;top:224px;width:16px;height:4px;background:#ff0000"></div>
<svg style="position:absolute;left:726px;top:219px;" width="6" height="4" viewBox="0 0 6 4"><path d="M0 0.5 L6 0.5 L3 3.5 Z" fill="#585f69"/></svg>
<svg style="position:absolute;left:741px;top:213px;" width="14" height="15" viewBox="0 0 14 15"><rect x="0" y="0" width="1" height="1" fill="#555"/><rect x="0" y="0" width="1" height="1" fill="#555"/><rect x="0" y="6" width="1" height="1" fill="#555"/><rect x="6" y="0" width="1" height="1" fill="#555"/><rect x="0" y="12" width="1" height="1" fill="#555"/><rect x="12" y="0" width="1" height="1" fill="#555"/><rect x="2" y="0" width="1" height="1" fill="#555"/><rect x="0" y="2" width="1" height="1" fill="#555"/><rect x="2" y="6" width="1" height="1" fill="#555"/><rect x="6" y="2" width="1" height="1" fill="#555"/><rect x="2" y="12" width="1" height="1" fill="#555"/><rect x="12" y="2" width="1" height="1" fill="#555"/><rect x="4" y="0" width="1" height="1" fill="#555"/><rect x="0" y="4" width="1" height="1" fill="#555"/><rect x="4" y="6" width="1" height="1" fill="#555"/><rect x="6" y="4" width="1" height="1" fill="#555"/><rect x="4" y="12" width="1" height="1" fill="#555"/><rect x="12" y="4" width="1" height="1" fill="#555"/><rect x="6" y="0" width="1" height="1" fill="#555"/><rect x="0" y="6" width="1" height="1" fill="#555"/><rect x="6" y="6" width="1" height="1" fill="#555"/><rect x="6" y="6" width="1" height="1" fill="#555"/><rect x="6" y="12" width="1" height="1" fill="#555"/><rect x="12" y="6" width="1" height="1" fill="#555"/><rect x="8" y="0" width="1" height="1" fill="#555"/><rect x="0" y="8" width="1" height="1" fill="#555"/><rect x="8" y="6" width="1" height="1" fill="#555"/><rect x="6" y="8" width="1" height="1" fill="#555"/><rect x="8" y="12" width="1" height="1" fill="#555"/><rect x="12" y="8" width="1" height="1" fill="#555"/><rect x="10" y="0" width="1" height="1" fill="#555"/><rect x="0" y="10" width="1" height="1" fill="#555"/><rect x="10" y="6" width="1" height="1" fill="#555"/><rect x="6" y="10" width="1" height="1" fill="#555"/><rect x="10" y="12" width="1" height="1" fill="#555"/><rect x="12" y="10" width="1" height="1" fill="#555"/><rect x="12" y="0" width="1" height="1" fill="#555"/><rect x="0" y="12" width="1" height="1" fill="#555"/><rect x="12" y="6" width="1" height="1" fill="#555"/><rect x="6" y="12" width="1" height="1" fill="#555"/><rect x="12" y="12" width="1" height="1" fill="#555"/><rect x="12" y="12" width="1" height="1" fill="#555"/><rect x="0" y="13" width="14" height="1.5" fill="#111"/></svg>
<svg style="position:absolute;left:761px;top:219px;" width="6" height="4" viewBox="0 0 6 4"><path d="M0 0.5 L6 0.5 L3 3.5 Z" fill="#585f69"/></svg>
<svg style="position:absolute;left:772px;top:212px;" width="19" height="16" viewBox="0 0 19 16"><path d="M1 3.5 H6 M1 3.5 L3.5 1 M1 3.5 L3.5 6" stroke="#3f6fd0" stroke-width="1.4" fill="none"/>
<text x="5.5" y="7" font-family="Liberation Sans" font-weight="bold" font-size="8.5" fill="#222">,0</text>
<text x="2" y="15" font-family="Liberation Sans" font-weight="bold" font-size="8.5" fill="#222">,00</text></svg>
<svg style="position:absolute;left:795px;top:212px;" width="19" height="16" viewBox="0 0 19 16"><text x="2" y="7" font-family="Liberation Sans" font-weight="bold" font-size="8.5" fill="#222">,00</text>
<path d="M0 11 H5.5 M5.5 11 L3 8.5 M5.5 11 L3 13.5" stroke="#3f6fd0" stroke-width="1.4" fill="none"/>
<text x="5.5" y="15" font-family="Liberation Sans" font-weight="bold" font-size="8.5" fill="#222">,0</text></svg>
<svg style="position:absolute;left:817px;top:211px;" width="17" height="16" viewBox="0 0 17 16"><path d="M10 6 L14.5 1.5 C15.5 0.5, 17 2, 16 3 L11.5 7.5 Z" fill="#3f64b0" stroke="#28457f" stroke-width="0.7"/>
<path d="M8 5 L12.5 9.5 L11 11 L6.5 6.5 Z" fill="#9aa3ae" stroke="#6b7480" stroke-width="0.6"/>
<path d="M6.5 6.5 L11 11 L5 15.5 C3 15.5, 0.5 13, 0.5 11 Z" fill="#f3c867" stroke="#b88a2a" stroke-width="0.7"/>
<path d="M2 12 L7 8 M3.5 13.5 L8.5 9.5" stroke="#d39a30" stroke-width="0.7"/></svg>
<div style="position:absolute;left:600px;top:248px;width:263px;height:354px;background:#fff;border:1px solid #a9aeb5;border-right:none;border-radius:2px 0 0 2px;box-sizing:border-box;box-shadow:1px 2px 3px rgba(0,0,0,0.13)"></div>
<div style="position:absolute;left:626px;top:249px;width:1px;height:352px;background:#e2e4e8"></div>
<div style="position:absolute;left:627px;top:295px;width:236px;height:17px;background:#eef0f4"></div>
<div style="position:absolute;left:636px;top:365px;width:227px;height:1px;background:repeating-linear-gradient(90deg,#c5c9ce 0 2px,transparent 2px 4px)"></div>
<div style="position:absolute;left:636px;top:435px;width:227px;height:1px;background:repeating-linear-gradient(90deg,#c5c9ce 0 2px,transparent 2px 4px)"></div>
<div style="position:absolute;left:636px;top:483px;width:227px;height:1px;background:repeating-linear-gradient(90deg,#c5c9ce 0 2px,transparent 2px 4px)"></div>
<div style="position:absolute;left:636px;top:509px;width:227px;height:1px;background:repeating-linear-gradient(90deg,#c5c9ce 0 2px,transparent 2px 4px)"></div>
<div id="t118" style="position:absolute;left:635.28px;top:254px;font:normal 11px/14px 'Liberation Sans', sans-serif;color:#1e1e1e;white-space:nowrap;transform:scaleX(1.0347);transform-origin:0 0;">В<u>ы</u>резать</div>
<div id="t119" style="position:absolute;left:635.26px;top:276px;font:normal 11px/14px 'Liberation Sans', sans-serif;color:#1e1e1e;white-space:nowrap;transform:scaleX(1.0850);transform-origin:0 0;"><u>К</u>опировать</div>
<div id="t120" style="position:absolute;left:635.29px;top:346px;font:normal 11px/14px 'Liberation Sans', sans-serif;color:#1e1e1e;white-space:nowrap;transform:scaleX(1.0185);transform-origin:0 0;"><u>С</u>пециальная вставка...</div>
<div id="t121" style="position:absolute;left:635.30px;top:372px;font:normal 11px/14px 'Liberation Sans', sans-serif;color:#1e1e1e;white-space:nowrap;transform:scaleX(0.9979);transform-origin:0 0;">Вс<u>т</u>авить...</div>
<div id="t122" style="position:absolute;left:635.30px;top:394px;font:normal 11px/14px 'Liberation Sans', sans-serif;color:#1e1e1e;white-space:nowrap;transform:scaleX(0.9963);transform-origin:0 0;"><u>У</u>далить...</div>
<div id="t123" style="position:absolute;left:635.27px;top:416px;font:normal 11px/14px 'Liberation Sans', sans-serif;color:#1e1e1e;white-space:nowrap;transform:scaleX(1.0634);transform-origin:0 0;">Очистить содер<u>ж</u>имое</div>
<div id="t124" style="position:absolute;left:635.29px;top:443px;font:normal 11px/14px 'Liberation Sans', sans-serif;color:#1e1e1e;white-space:nowrap;transform:scaleX(1.0287);transform-origin:0 0;"><u>Ф</u>ильтр</div>
<div id="t125" style="position:absolute;left:635.26px;top:465px;font:normal 11px/14px 'Liberation Sans', sans-serif;color:#1e1e1e;white-space:nowrap;transform:scaleX(1.0742);transform-origin:0 0;"><u>С</u>ортировка</div>
<div id="t126" style="position:absolute;left:635.27px;top:490px;font:normal 11px/14px 'Liberation Sans', sans-serif;color:#1e1e1e;white-space:nowrap;transform:scaleX(1.0596);transform-origin:0 0;">Вставить приме<u>ч</u>ание</div>
<div id="t127" style="position:absolute;left:635.28px;top:517px;font:normal 11px/14px 'Liberation Sans', sans-serif;color:#1e1e1e;white-space:nowrap;transform:scaleX(1.0308);transform-origin:0 0;">Формат <u>я</u>чеек...</div>
<div id="t128" style="position:absolute;left:635.28px;top:539px;font:normal 11px/14px 'Liberation Sans', sans-serif;color:#1e1e1e;white-space:nowrap;transform:scaleX(1.0421);transform-origin:0 0;">Вы<u>б</u>рать из раскрывающегося списка...</div>
<div id="t129" style="position:absolute;left:635.27px;top:560px;font:normal 11px/14px 'Liberation Sans', sans-serif;color:#1e1e1e;white-space:nowrap;transform:scaleX(1.0501);transform-origin:0 0;">Присвоит<u>ь</u> имя...</div>
<div id="t130" style="position:absolute;left:635.29px;top:582px;font:normal 11px/14px 'Liberation Sans', sans-serif;color:#1e1e1e;white-space:nowrap;transform:scaleX(1.0245);transform-origin:0 0;">Гип<u>е</u>рссылка...</div>
<div id="t131" style="position:absolute;left:635.70px;top:297px;font:bold 11px/14px 'Liberation Sans', sans-serif;color:#2b3a4e;white-space:nowrap;transform:scaleX(0.9725);transform-origin:0 0;">Параметры вставки:</div>
<svg style="position:absolute;left:855px;top:446px;" width="5" height="8" viewBox="0 0 5 8"><path d="M0 0 L5 4 L0 8 Z" fill="#7c848e"/></svg>
<svg style="position:absolute;left:855px;top:468px;" width="5" height="8" viewBox="0 0 5 8"><path d="M0 0 L5 4 L0 8 Z" fill="#7c848e"/></svg>
<svg style="position:absolute;left:608px;top:254px;" width="11" height="14" viewBox="0 0 11 14"><path d="M2.5 0.5 L7 8.5 M8.5 0.5 L4 8.5" stroke="#6a737e" stroke-width="1.6"/>
<circle cx="3" cy="11" r="2.2" fill="none" stroke="#2f5fb8" stroke-width="1.5"/>
<circle cx="8" cy="11" r="2.2" fill="none" stroke="#2f5fb8" stroke-width="1.5"/></svg>
<svg style="position:absolute;left:605px;top:276px;" width="17" height="14" viewBox="0 0 17 14"><path d="M0.5 0.5 H6.5 L9.5 3.5 V10.5 H0.5 Z" fill="#fff" stroke="#6b7fa6"/>
<path d="M2 3.5 H6 M2 5.5 H8 M2 7.5 H5" stroke="#3f6fc8"/>
<path d="M6.5 3.5 H12.5 L15.5 6.5 V13.5 H6.5 Z" fill="#fff" stroke="#4a6aa8"/>
<path d="M8 6.5 H12 M8 8.5 H14 M8 10.5 H14 M8 12.5 H13" stroke="#3f6fc8"/></svg>
<svg style="position:absolute;left:606px;top:300px;" width="16" height="12" viewBox="0 0 16 12"><rect x="0.5" y="1.5" width="10" height="10" fill="#e7a85a" stroke="#a86e2c"/><rect x="6.5" y="4.5" width="9" height="7" fill="#fff" stroke="#6a7380"/><path d="M8 7 H14 M8 9 H14" stroke="#6a7380"/></svg>
<svg style="position:absolute;left:631px;top:315px;" width="24" height="23" viewBox="0 0 24 23"><rect x="0.5" y="2.5" width="22" height="20" rx="1" fill="#f3c986" stroke="#c08a40"/>
<rect x="7" y="0.5" width="9" height="4" rx="1" fill="#e9edf2" stroke="#7a8696"/>
<rect x="3" y="6" width="17" height="14" fill="#fff"/><path d="M5 9 H18 M5 12 H18 M5 15 H11" stroke="#4f6fb8"/><path d="M5 17.5 H11" stroke="#d0a040" stroke-dasharray="1 1"/><path d="M10 20 L20 8 L23 10 L13 22 Z" fill="#5a7fc8" stroke="#34508c" stroke-width="0.8"/><path d="M19 9 L23 4" stroke="#9aa4b0" stroke-width="2"/></svg>
<svg style="position:absolute;left:661px;top:315px;" width="24" height="23" viewBox="0 0 24 23"><rect x="0.5" y="2.5" width="22" height="20" rx="1" fill="#f3c986" stroke="#c08a40"/>
<rect x="7" y="0.5" width="9" height="4" rx="1" fill="#e9edf2" stroke="#7a8696"/>
<rect x="3" y="6" width="17" height="14" fill="#fff"/><path d="M5 9 H18 M5 11.5 H18 M5 14 H18 M5 16.5 H18" stroke="#4f6fb8"/></svg>
<svg style="position:absolute;left:606px;top:490px;" width="16" height="14" viewBox="0 0 16 14"><path d="M0.5 2.5 H15.5 V13.5 H0.5 Z" fill="#f1cf6a" stroke="#b8902e"/><path d="M1 3 H15 V7 H1 Z" fill="#f8e6a8"/><circle cx="3" cy="2" r="2.2" fill="#fff6b0" stroke="#e8c040" stroke-width="0.6"/></svg>
<svg style="position:absolute;left:606px;top:516px;" width="16" height="14" viewBox="0 0 16 14"><rect x="0.5" y="4.5" width="14" height="9" fill="#fff" stroke="#4a6fa8"/><path d="M2 7.5 H8 M2 10 H12" stroke="#6d8cc0"/><path d="M3 5 L9 0.5 L15 5" fill="#f0c060" stroke="#b88a30" stroke-width="0.8"/><path d="M11 1 L15 1 L15 4" fill="none" stroke="#2f9a3a" stroke-width="1.5"/></svg>
<svg style="position:absolute;left:606px;top:581px;" width="17" height="17" viewBox="0 0 17 17"><circle cx="8" cy="6.5" r="6" fill="#4d8fdc" stroke="#2f5f9e" stroke-width="0.8"/><path d="M4 3 C6 2, 8 4, 10 2.5 C12 4, 11 7, 8 8 C7 10, 5 9, 4 7 Z" fill="#4fae3f"/><ellipse cx="5.5" cy="13" rx="4" ry="2.5" fill="none" stroke="#1f3466" stroke-width="2.2"/><ellipse cx="5.5" cy="13" rx="4" ry="2.5" fill="none" stroke="#e8eef6" stroke-width="0.8"/><ellipse cx="11.5" cy="13" rx="4" ry="2.5" fill="none" stroke="#1f3466" stroke-width="2.2"/><ellipse cx="11.5" cy="13" rx="4" ry="2.5" fill="none" stroke="#e8eef6" stroke-width="0.8"/></svg>
<div style="position:absolute;left:597px;top:267px;width:123px;height:33px;border:5px solid #ff0a0a;border-radius:15px;box-sizing:border-box;box-shadow:3px 3px 4px rgba(0,0,0,0.35), inset 3px 4px 5px rgba(0,0,0,0.32)"></div>
</body></html>
